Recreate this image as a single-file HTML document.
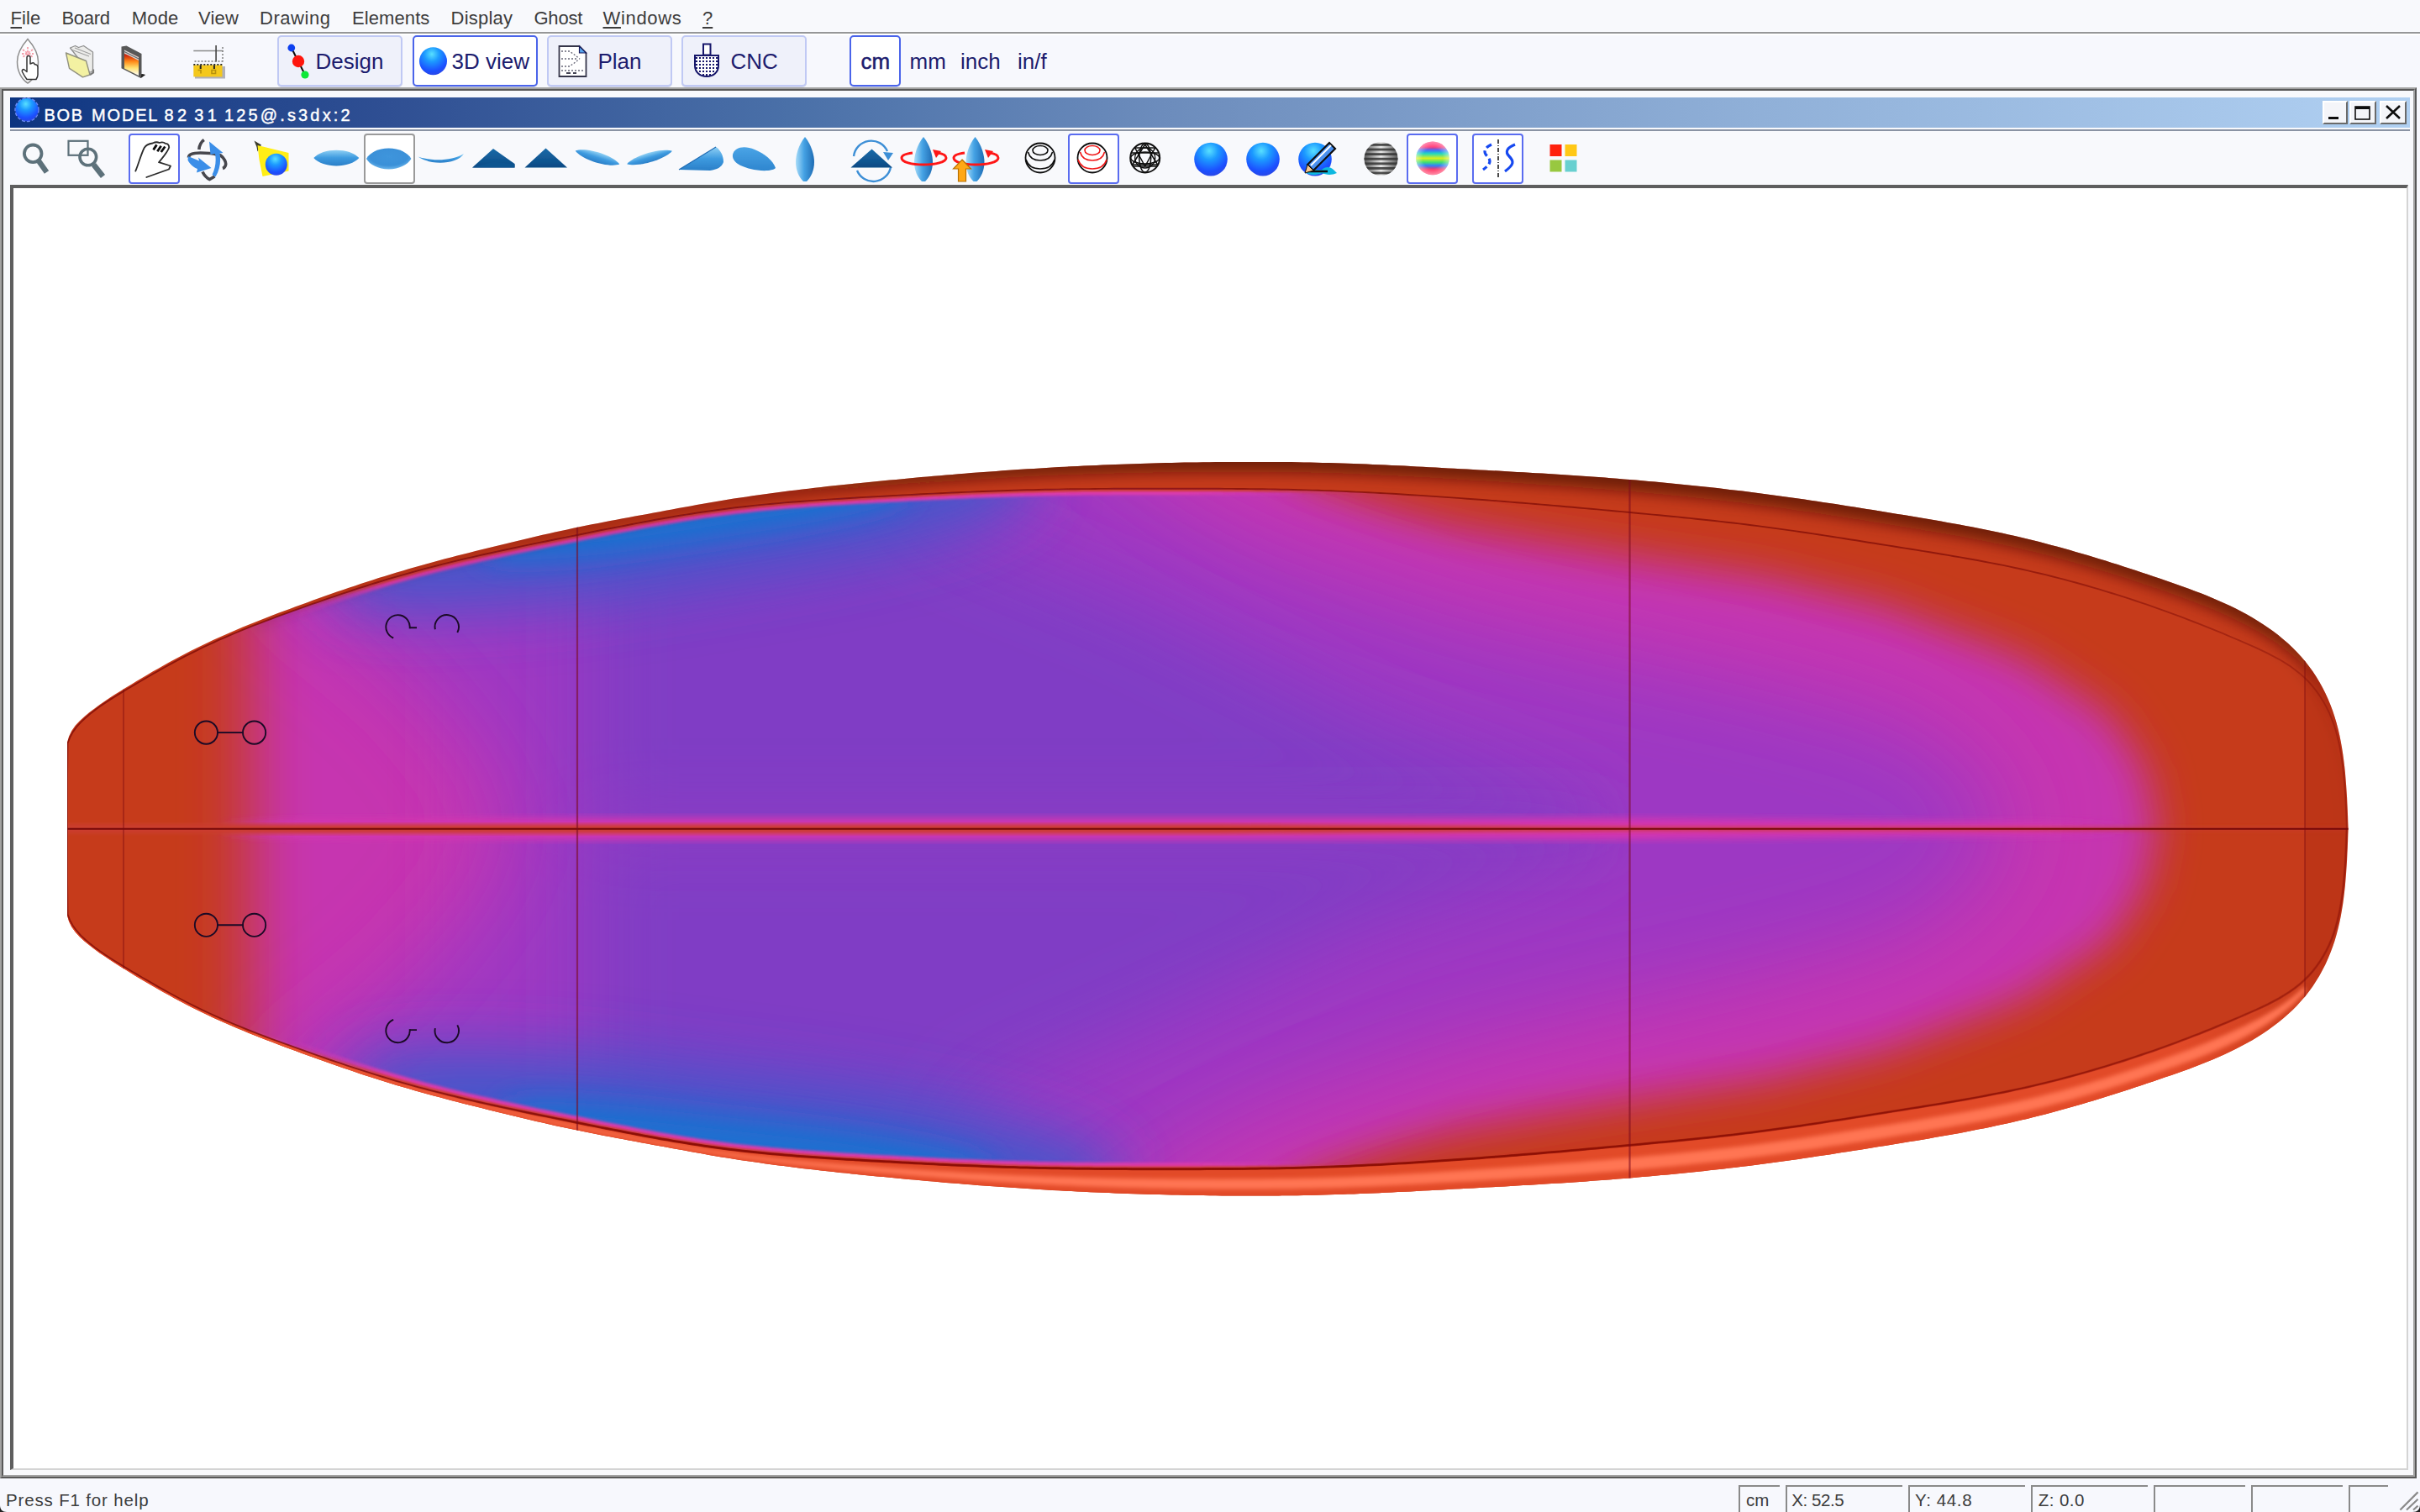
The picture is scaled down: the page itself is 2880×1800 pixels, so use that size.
<!DOCTYPE html>
<html><head><meta charset="utf-8"><title>Shape3D</title><style>
*{box-sizing:border-box}
html,body{margin:0;padding:0}
body{width:2880px;height:1800px;overflow:hidden;background:#f7f8fd;font-family:"Liberation Sans",sans-serif;position:relative}
.abs{position:absolute}
.ft{position:absolute;line-height:24px;white-space:nowrap}
.mi{color:#3c3c3c}
.ti{color:#fff;-webkit-text-stroke:0.45px #fff}
.sx{color:#3c3c3c}
.mi u{text-decoration-thickness:2px;text-underline-offset:3px}
.tb{position:absolute;top:42px;height:61px;border:2px solid #c0c9f4;border-radius:5px;background:#eff1fa;box-shadow:0 1px 0 #d0d4ea}
.tb.sel{background:#fff;border-color:#4a64ea}
.tt{position:absolute;font-size:26px;line-height:30px;color:#1c1c6e;white-space:nowrap;top:57.5px}
.cb{position:absolute;top:159px;height:60px;width:61px;border:2px solid #5a6cf0;border-radius:4px;background:#fff}
.cb.g{border-color:#9a9a9a}
.sf{position:absolute;top:1768px;height:32px;border-top:2px solid #8a8a8a;border-left:2px solid #8a8a8a}
.st{position:absolute;top:1774px;font-size:20.5px;line-height:24px;color:#3e3e3e;white-space:nowrap;letter-spacing:0.7px}
.wb{position:absolute;top:120px;height:28px;background:#f4f5f9;border-top:2px solid #fff;border-left:2px solid #fff;border-right:2px solid #6a6a6a;border-bottom:2px solid #6a6a6a}
</style></head><body>
<!-- menu bar -->
<div class="abs" style="left:0;top:0;width:2880px;height:38px;background:#f8f9fc"></div>
<span class="ft mi" style="left:12.5px;top:10.2px;font-size:22px;letter-spacing:0.08px;"><u>F</u>ile</span><span class="ft mi" style="left:73.4px;top:10.2px;font-size:22px;letter-spacing:-0.28px;">Board</span><span class="ft mi" style="left:156.7px;top:10.2px;font-size:22px;letter-spacing:0.19px;">Mode</span><span class="ft mi" style="left:236.0px;top:10.2px;font-size:22px;letter-spacing:0.23px;">View</span><span class="ft mi" style="left:309.0px;top:10.2px;font-size:22px;letter-spacing:0.55px;">Drawing</span><span class="ft mi" style="left:419.0px;top:10.2px;font-size:22px;letter-spacing:0.09px;">Elements</span><span class="ft mi" style="left:536.6px;top:10.2px;font-size:22px;letter-spacing:0.21px;">Display</span><span class="ft mi" style="left:635.4px;top:10.2px;font-size:22px;letter-spacing:-0.15px;">Ghost</span><span class="ft mi" style="left:717.5px;top:10.2px;font-size:22px;letter-spacing:0.67px;"><u>W</u>indows</span><span class="ft mi" style="left:836.0px;top:10.2px;font-size:22px;letter-spacing:0.00px;"><u>?</u></span>
<div class="abs" style="left:0;top:38px;width:2880px;height:2px;background:#969798"></div>
<div class="abs" style="left:0;top:40px;width:2880px;height:2px;background:#fff"></div>
<!-- main toolbar buttons -->
<div class="tb" style="left:330px;width:149px"></div><span class="tt" style="left:375.5px">Design</span>
<div class="tb sel" style="left:491px;width:149px"></div><span class="tt" style="left:537.5px">3D view</span>
<div class="tb" style="left:650.5px;width:149px"></div><span class="tt" style="left:711.5px">Plan</span>
<div class="tb" style="left:811px;width:149px"></div><span class="tt" style="left:869.5px">CNC</span>
<div class="tb sel" style="left:1010.5px;width:61px"></div><span class="tt" style="left:1024.5px;-webkit-text-stroke:0.5px #1c1c6e">cm</span>
<span class="tt" style="left:1082.5px">mm</span><span class="tt" style="left:1143px">inch</span><span class="tt" style="left:1211px">in/f</span>
<!-- MDI frame -->
<div class="abs" style="left:0;top:104px;width:2876px;height:1656px;border:2px solid #585858;border-top-color:#a2a2a2;border-left-color:#a2a2a2;background:#f8f9fc"></div>
<div class="abs" style="left:2px;top:106px;width:2872px;height:1652px;border:2px solid #a2a2a2;border-top-color:#585858;border-left-color:#585858"></div>
<!-- title bar -->
<div class="abs" style="left:12px;top:116px;width:2856px;height:36px;background:linear-gradient(90deg,#0c3480 0%,#1a3f88 5%,#2f4f93 15.700%,#4a70a8 32.500%,#6c8cbc 47.900%,#90b0d8 73%,#b0d0f2 100%)"></div>
<div class="abs" style="left:12px;top:154px;width:2856px;height:2px;background:#8a93a3"></div>
<span class="ft ti" style="left:52.6px;top:124.9px;font-size:20px;letter-spacing:1.68px;">BOB</span><span class="ft ti" style="left:109.1px;top:124.9px;font-size:20px;letter-spacing:1.82px;">MODEL</span><span class="ft ti" style="left:195.4px;top:124.9px;font-size:20px;letter-spacing:4.55px;">82</span><span class="ft ti" style="left:231.2px;top:124.9px;font-size:20px;letter-spacing:4.55px;">31</span><span class="ft ti" style="left:266.9px;top:124.9px;font-size:20px;letter-spacing:3.16px;">125@.s3dx:2</span>
<div class="wb" style="left:2764px;width:30px"></div><div class="wb" style="left:2796px;width:32px"></div><div class="wb" style="left:2832px;width:32px"></div>
<!-- child toolbar selected buttons -->
<div class="cb" style="left:153px"></div><div class="cb g" style="left:432.5px"></div><div class="cb" style="left:1270.5px"></div>
<div class="cb" style="left:1674px"></div><div class="cb" style="left:1752px"></div>
<!-- canvas -->
<div class="abs" style="left:12px;top:220px;width:2854px;height:1530px;background:#fff;border-top:4px solid #5e5e5e;border-left:4px solid #5e5e5e;border-right:2px solid #d4d4d4;border-bottom:2px solid #d4d4d4"></div>
<!-- status bar -->
<div class="abs" style="left:0;top:1760px;width:2880px;height:40px;background:#f7f8fd"></div>
<span class="ft sx" style="left:7.0px;top:1774.2px;font-size:20.5px;letter-spacing:0.84px;">Press F1 for help</span><span class="ft sx" style="left:2078.0px;top:1774.2px;font-size:20.5px;letter-spacing:-0.03px;">cm</span><span class="ft sx" style="left:2132.3px;top:1774.2px;font-size:20.5px;letter-spacing:-0.45px;">X: 52.5</span><span class="ft sx" style="left:2279.0px;top:1774.2px;font-size:20.5px;letter-spacing:0.62px;">Y: 44.8</span><span class="ft sx" style="left:2425.8px;top:1774.2px;font-size:20.5px;letter-spacing:0.43px;">Z: 0.0</span>
<div class="sf" style="left:2068.5px;width:49px"></div>
<div class="sf" style="left:2124.5px;width:139px"></div>
<div class="sf" style="left:2271px;width:139px"></div>
<div class="sf" style="left:2417px;width:139px"></div>
<div class="sf" style="left:2562.5px;width:109px"></div><div class="sf" style="left:2679px;width:109px"></div><div class="sf" style="left:2795px;width:47px"></div>

<svg id="board" style="position:absolute;left:0;top:0" width="2880" height="1800" viewBox="0 0 2880 1800">
<defs>
<clipPath id="cOut"><path d="M80.0,986.7 80.0,926.7 80.0,883.7 82.1,876.5 85.3,869.9 89.6,863.8 94.8,858.2 100.5,853.0 106.4,848.1 112.5,843.5 118.5,839.0 124.7,834.8 130.9,830.6 137.1,826.6 143.3,822.7 149.6,818.8 156.0,814.9 162.3,811.0 168.7,807.2 175.1,803.4 181.6,799.6 188.1,795.9 194.6,792.2 201.2,788.6 207.7,785.0 214.4,781.4 221.0,778.0 227.7,774.5 234.4,771.2 241.1,767.9 247.9,764.7 254.6,761.5 261.4,758.4 268.3,755.4 275.1,752.4 282.0,749.4 288.9,746.6 295.8,743.7 302.8,740.9 309.7,738.2 316.7,735.5 323.6,732.8 330.6,730.1 337.6,727.5 344.6,724.9 351.6,722.3 358.7,719.7 365.7,717.2 372.7,714.6 379.8,712.1 386.8,709.6 393.9,707.1 400.9,704.6 408.0,702.2 415.1,699.8 422.2,697.4 429.2,695.0 436.3,692.7 443.5,690.4 450.6,688.1 457.7,685.9 464.8,683.7 472.0,681.5 479.2,679.4 486.3,677.3 493.5,675.2 500.7,673.2 507.9,671.2 515.1,669.2 522.3,667.3 529.5,665.3 536.8,663.4 544.0,661.6 551.3,659.7 558.5,657.9 565.8,656.1 573.0,654.3 580.3,652.5 587.5,650.7 594.8,648.9 602.1,647.2 609.3,645.4 616.6,643.7 623.9,641.9 631.2,640.2 638.4,638.5 645.7,636.8 653.0,635.2 660.3,633.5 667.6,631.9 674.9,630.4 682.2,628.8 689.5,627.3 696.8,625.8 704.2,624.3 711.5,622.9 718.8,621.5 726.2,620.1 733.5,618.7 740.9,617.3 748.2,615.9 755.6,614.6 762.9,613.2 770.3,611.9 777.6,610.5 785.0,609.2 792.3,607.8 799.7,606.5 807.0,605.1 814.4,603.8 821.8,602.4 829.1,601.1 836.5,599.8 843.8,598.5 851.2,597.2 858.6,596.0 865.9,594.8 873.3,593.6 880.7,592.5 888.1,591.4 895.5,590.3 902.9,589.3 910.3,588.2 917.7,587.2 925.1,586.2 932.5,585.3 939.9,584.3 947.4,583.4 954.8,582.5 962.2,581.7 969.6,580.8 977.1,580.0 984.5,579.1 991.9,578.3 999.4,577.5 1006.8,576.8 1014.2,576.0 1021.7,575.2 1029.1,574.5 1036.6,573.7 1044.0,573.0 1051.4,572.3 1058.9,571.6 1066.3,570.9 1073.8,570.2 1081.2,569.5 1088.7,568.8 1096.1,568.1 1103.5,567.5 1111.0,566.8 1118.4,566.2 1125.9,565.5 1133.3,564.9 1140.8,564.3 1148.2,563.7 1155.7,563.1 1163.1,562.5 1170.6,562.0 1178.0,561.4 1185.5,560.9 1192.9,560.3 1200.4,559.8 1207.9,559.3 1215.3,558.8 1222.8,558.3 1230.2,557.9 1237.7,557.4 1245.2,557.0 1252.6,556.5 1260.1,556.1 1267.5,555.7 1275.0,555.3 1282.5,555.0 1289.9,554.6 1297.4,554.2 1304.9,553.9 1312.3,553.6 1319.8,553.3 1327.3,553.0 1334.8,552.7 1342.2,552.4 1349.7,552.2 1357.2,551.9 1364.6,551.7 1372.1,551.5 1379.6,551.3 1387.1,551.1 1394.5,550.9 1402.0,550.8 1409.5,550.6 1416.9,550.5 1424.4,550.4 1431.9,550.3 1439.4,550.2 1446.8,550.1 1454.3,550.0 1461.8,550.0 1469.3,549.9 1476.7,549.9 1484.2,549.9 1491.7,549.9 1499.2,549.9 1506.6,549.9 1514.1,549.9 1521.6,550.0 1529.1,550.1 1536.5,550.1 1544.0,550.2 1551.5,550.4 1559.0,550.5 1566.4,550.7 1573.9,550.9 1581.4,551.1 1588.8,551.3 1596.3,551.5 1603.8,551.8 1611.2,552.0 1618.7,552.3 1626.2,552.6 1633.7,552.9 1641.1,553.2 1648.6,553.6 1656.1,553.9 1663.5,554.3 1671.0,554.6 1678.5,555.0 1685.9,555.4 1693.4,555.8 1700.8,556.2 1708.3,556.6 1715.8,557.0 1723.2,557.4 1730.7,557.8 1738.2,558.2 1745.6,558.6 1753.1,559.0 1760.6,559.4 1768.0,559.8 1775.5,560.2 1783.0,560.6 1790.4,561.0 1797.9,561.4 1805.3,561.9 1812.8,562.3 1820.3,562.7 1827.7,563.2 1835.2,563.6 1842.6,564.1 1850.1,564.6 1857.6,565.0 1865.0,565.5 1872.5,566.0 1879.9,566.5 1887.4,567.0 1894.8,567.6 1902.3,568.1 1909.8,568.6 1917.2,569.2 1924.7,569.8 1932.1,570.4 1939.6,571.0 1947.0,571.6 1954.5,572.3 1961.9,572.9 1969.4,573.6 1976.8,574.3 1984.2,575.0 1991.7,575.7 1999.1,576.4 2006.6,577.2 2014.0,577.9 2021.4,578.7 2028.9,579.5 2036.3,580.3 2043.7,581.1 2051.2,582.0 2058.6,582.9 2066.0,583.7 2073.4,584.6 2080.8,585.5 2088.3,586.5 2095.7,587.4 2103.1,588.4 2110.5,589.4 2117.9,590.4 2125.3,591.4 2132.7,592.5 2140.1,593.5 2147.5,594.6 2154.9,595.7 2162.3,596.8 2169.7,597.9 2177.1,599.0 2184.4,600.1 2191.8,601.3 2199.2,602.4 2206.6,603.6 2214.0,604.7 2221.4,605.9 2228.8,607.1 2236.1,608.3 2243.5,609.5 2250.9,610.7 2258.3,611.9 2265.7,613.1 2273.1,614.3 2280.4,615.5 2287.8,616.7 2295.2,618.0 2302.6,619.3 2309.9,620.6 2317.3,621.9 2324.6,623.2 2332.0,624.5 2339.4,625.9 2346.7,627.3 2354.0,628.8 2361.4,630.2 2368.7,631.7 2376.0,633.3 2383.3,634.8 2390.6,636.4 2397.9,638.1 2405.1,639.8 2412.4,641.5 2419.7,643.3 2426.9,645.1 2434.1,647.0 2441.4,648.9 2448.6,650.8 2455.8,652.8 2463.0,654.8 2470.1,656.9 2477.3,659.0 2484.5,661.1 2491.6,663.2 2498.8,665.4 2505.9,667.6 2513.1,669.9 2520.2,672.1 2527.3,674.4 2534.4,676.7 2541.6,679.1 2548.7,681.4 2555.8,683.8 2562.9,686.2 2569.9,688.6 2577.0,691.1 2584.1,693.5 2591.2,696.0 2598.2,698.5 2605.3,701.0 2612.3,703.7 2619.3,706.3 2626.2,709.1 2633.1,711.9 2640.0,714.9 2646.8,717.9 2653.6,721.1 2660.3,724.3 2667.0,727.8 2673.6,731.3 2680.1,735.0 2686.6,738.9 2692.9,743.0 2699.2,747.2 2705.3,751.6 2711.3,756.1 2717.1,760.9 2722.8,765.8 2728.3,770.9 2733.5,776.2 2738.6,781.8 2743.5,787.5 2748.1,793.4 2752.5,799.5 2756.6,805.8 2760.5,812.2 2764.1,818.8 2767.5,825.5 2770.6,832.3 2773.5,839.3 2776.1,846.3 2778.5,853.4 2780.6,860.6 2782.5,867.8 2784.2,875.1 2785.7,882.5 2787.0,889.8 2788.2,897.2 2789.2,904.7 2790.1,912.1 2790.9,919.5 2791.5,927.0 2792.1,934.4 2792.6,941.9 2793.1,949.4 2793.4,956.8 2793.8,964.3 2794.1,971.8 2794.3,979.2 2794.6,986.7 2794.3,994.2 2794.1,1001.6 2793.8,1009.1 2793.4,1016.6 2793.1,1024.0 2792.6,1031.5 2792.1,1039.0 2791.5,1046.4 2790.9,1053.9 2790.1,1061.3 2789.2,1068.7 2788.2,1076.2 2787.0,1083.6 2785.7,1090.9 2784.2,1098.3 2782.5,1105.6 2780.6,1112.8 2778.5,1120.0 2776.1,1127.1 2773.5,1134.1 2770.6,1141.1 2767.5,1147.9 2764.1,1154.6 2760.5,1161.2 2756.6,1167.6 2752.5,1173.9 2748.1,1180.0 2743.5,1185.9 2738.6,1191.6 2733.5,1197.2 2728.3,1202.5 2722.8,1207.6 2717.1,1212.5 2711.3,1217.3 2705.3,1221.8 2699.2,1226.2 2692.9,1230.4 2686.6,1234.5 2680.1,1238.4 2673.6,1242.1 2667.0,1245.6 2660.3,1249.1 2653.6,1252.3 2646.8,1255.5 2640.0,1258.5 2633.1,1261.5 2626.2,1264.3 2619.3,1267.1 2612.3,1269.7 2605.3,1272.4 2598.2,1274.9 2591.2,1277.4 2584.1,1279.9 2577.0,1282.3 2569.9,1284.8 2562.9,1287.2 2555.8,1289.6 2548.7,1292.0 2541.6,1294.3 2534.4,1296.7 2527.3,1299.0 2520.2,1301.3 2513.1,1303.5 2505.9,1305.8 2498.8,1308.0 2491.6,1310.2 2484.5,1312.3 2477.3,1314.4 2470.1,1316.5 2463.0,1318.6 2455.8,1320.6 2448.6,1322.6 2441.4,1324.5 2434.1,1326.4 2426.9,1328.3 2419.7,1330.1 2412.4,1331.9 2405.1,1333.6 2397.9,1335.3 2390.6,1337.0 2383.3,1338.6 2376.0,1340.1 2368.7,1341.7 2361.4,1343.2 2354.0,1344.6 2346.7,1346.1 2339.4,1347.5 2332.0,1348.9 2324.6,1350.2 2317.3,1351.5 2309.9,1352.8 2302.6,1354.1 2295.2,1355.4 2287.8,1356.7 2280.4,1357.9 2273.1,1359.1 2265.7,1360.3 2258.3,1361.5 2250.9,1362.7 2243.5,1363.9 2236.1,1365.1 2228.8,1366.3 2221.4,1367.5 2214.0,1368.7 2206.6,1369.8 2199.2,1371.0 2191.8,1372.1 2184.4,1373.3 2177.1,1374.4 2169.7,1375.5 2162.3,1376.6 2154.9,1377.7 2147.5,1378.8 2140.1,1379.9 2132.7,1380.9 2125.3,1382.0 2117.9,1383.0 2110.5,1384.0 2103.1,1385.0 2095.7,1386.0 2088.3,1386.9 2080.8,1387.9 2073.4,1388.8 2066.0,1389.7 2058.6,1390.5 2051.2,1391.4 2043.7,1392.3 2036.3,1393.1 2028.9,1393.9 2021.4,1394.7 2014.0,1395.5 2006.6,1396.2 1999.1,1397.0 1991.7,1397.7 1984.2,1398.4 1976.8,1399.1 1969.4,1399.8 1961.9,1400.5 1954.5,1401.1 1947.0,1401.8 1939.6,1402.4 1932.1,1403.0 1924.7,1403.6 1917.2,1404.2 1909.8,1404.8 1902.3,1405.3 1894.8,1405.8 1887.4,1406.4 1879.9,1406.9 1872.5,1407.4 1865.0,1407.9 1857.6,1408.4 1850.1,1408.8 1842.6,1409.3 1835.2,1409.8 1827.7,1410.2 1820.3,1410.7 1812.8,1411.1 1805.3,1411.5 1797.9,1412.0 1790.4,1412.4 1783.0,1412.8 1775.5,1413.2 1768.0,1413.6 1760.6,1414.0 1753.1,1414.4 1745.6,1414.8 1738.2,1415.2 1730.7,1415.6 1723.2,1416.0 1715.8,1416.4 1708.3,1416.8 1700.8,1417.2 1693.4,1417.6 1685.9,1418.0 1678.5,1418.4 1671.0,1418.8 1663.5,1419.1 1656.1,1419.5 1648.6,1419.8 1641.1,1420.2 1633.7,1420.5 1626.2,1420.8 1618.7,1421.1 1611.2,1421.4 1603.8,1421.6 1596.3,1421.9 1588.8,1422.1 1581.4,1422.3 1573.9,1422.5 1566.4,1422.7 1559.0,1422.9 1551.5,1423.0 1544.0,1423.2 1536.5,1423.3 1529.1,1423.3 1521.6,1423.4 1514.1,1423.5 1506.6,1423.5 1499.2,1423.5 1491.7,1423.5 1484.2,1423.5 1476.7,1423.5 1469.3,1423.5 1461.8,1423.4 1454.3,1423.4 1446.8,1423.3 1439.4,1423.2 1431.9,1423.1 1424.4,1423.0 1416.9,1422.9 1409.5,1422.8 1402.0,1422.6 1394.5,1422.5 1387.1,1422.3 1379.6,1422.1 1372.1,1421.9 1364.6,1421.7 1357.2,1421.5 1349.7,1421.2 1342.2,1421.0 1334.8,1420.7 1327.3,1420.4 1319.8,1420.1 1312.3,1419.8 1304.9,1419.5 1297.4,1419.2 1289.9,1418.8 1282.5,1418.4 1275.0,1418.1 1267.5,1417.7 1260.1,1417.3 1252.6,1416.9 1245.2,1416.4 1237.7,1416.0 1230.2,1415.5 1222.8,1415.1 1215.3,1414.6 1207.9,1414.1 1200.4,1413.6 1192.9,1413.1 1185.5,1412.5 1178.0,1412.0 1170.6,1411.4 1163.1,1410.9 1155.7,1410.3 1148.2,1409.7 1140.8,1409.1 1133.3,1408.5 1125.9,1407.9 1118.4,1407.2 1111.0,1406.6 1103.5,1405.9 1096.1,1405.3 1088.7,1404.6 1081.2,1403.9 1073.8,1403.2 1066.3,1402.5 1058.9,1401.8 1051.4,1401.1 1044.0,1400.4 1036.6,1399.7 1029.1,1398.9 1021.7,1398.2 1014.2,1397.4 1006.8,1396.6 999.4,1395.9 991.9,1395.1 984.5,1394.3 977.1,1393.4 969.6,1392.6 962.2,1391.7 954.8,1390.9 947.4,1390.0 939.9,1389.1 932.5,1388.1 925.1,1387.2 917.7,1386.2 910.3,1385.2 902.9,1384.1 895.5,1383.1 888.1,1382.0 880.7,1380.9 873.3,1379.8 865.9,1378.6 858.6,1377.4 851.2,1376.2 843.8,1374.9 836.5,1373.6 829.1,1372.3 821.8,1371.0 814.4,1369.6 807.0,1368.3 799.7,1366.9 792.3,1365.6 785.0,1364.2 777.6,1362.9 770.3,1361.5 762.9,1360.2 755.6,1358.8 748.2,1357.5 740.9,1356.1 733.5,1354.7 726.2,1353.3 718.8,1351.9 711.5,1350.5 704.2,1349.1 696.8,1347.6 689.5,1346.1 682.2,1344.6 674.9,1343.0 667.6,1341.5 660.3,1339.9 653.0,1338.2 645.7,1336.6 638.4,1334.9 631.2,1333.2 623.9,1331.5 616.6,1329.7 609.3,1328.0 602.1,1326.2 594.8,1324.5 587.5,1322.7 580.3,1320.9 573.0,1319.1 565.8,1317.3 558.5,1315.5 551.3,1313.7 544.0,1311.8 536.8,1310.0 529.5,1308.1 522.3,1306.1 515.1,1304.2 507.9,1302.2 500.7,1300.2 493.5,1298.2 486.3,1296.1 479.2,1294.0 472.0,1291.9 464.8,1289.7 457.7,1287.5 450.6,1285.3 443.5,1283.0 436.3,1280.7 429.2,1278.4 422.2,1276.0 415.1,1273.6 408.0,1271.2 400.9,1268.8 393.9,1266.3 386.8,1263.8 379.8,1261.3 372.7,1258.8 365.7,1256.2 358.7,1253.7 351.6,1251.1 344.6,1248.5 337.6,1245.9 330.6,1243.3 323.6,1240.6 316.7,1237.9 309.7,1235.2 302.8,1232.5 295.8,1229.7 288.9,1226.8 282.0,1224.0 275.1,1221.0 268.3,1218.0 261.4,1215.0 254.6,1211.9 247.9,1208.7 241.1,1205.5 234.4,1202.2 227.7,1198.9 221.0,1195.4 214.4,1192.0 207.7,1188.4 201.2,1184.8 194.6,1181.2 188.1,1177.5 181.6,1173.8 175.1,1170.0 168.7,1166.2 162.3,1162.4 156.0,1158.5 149.6,1154.6 143.3,1150.7 137.1,1146.8 130.9,1142.8 124.7,1138.6 118.5,1134.4 112.5,1129.9 106.4,1125.3 100.5,1120.4 94.8,1115.2 89.6,1109.6 85.3,1103.5 82.1,1096.9 80.0,1089.7 80.0,1046.7Z"/></clipPath>
<clipPath id="cIn"><path d="M80.0,986.7 80.0,926.7 80.5,884.7 83.2,877.8 86.7,871.4 91.1,865.4 96.1,859.8 101.6,854.7 107.3,849.8 113.2,845.2 119.2,840.8 125.3,836.6 131.4,832.6 137.7,828.7 143.9,824.9 150.2,821.0 156.6,817.2 162.9,813.5 169.3,809.7 175.7,806.0 182.1,802.3 188.5,798.6 194.9,795.0 201.4,791.4 207.9,787.9 214.4,784.4 221.0,780.9 227.6,777.6 234.2,774.3 240.8,771.0 247.5,767.9 254.2,764.8 261.0,761.7 267.7,758.8 274.5,755.9 281.3,753.0 288.2,750.2 295.0,747.4 301.9,744.7 308.8,742.1 315.7,739.4 322.6,736.8 329.6,734.2 336.5,731.7 343.5,729.2 350.4,726.7 357.4,724.2 364.4,721.7 371.3,719.2 378.3,716.8 385.3,714.4 392.3,711.9 399.3,709.6 406.3,707.2 413.3,704.8 420.3,702.5 427.3,700.2 434.4,698.0 441.4,695.7 448.5,693.5 455.5,691.4 462.6,689.2 469.7,687.1 476.8,685.1 483.9,683.1 491.0,681.1 498.1,679.1 505.3,677.2 512.4,675.3 519.6,673.5 526.8,671.7 533.9,669.9 541.1,668.2 548.3,666.4 555.5,664.7 562.7,663.1 569.9,661.4 577.1,659.8 584.3,658.2 591.6,656.6 598.8,655.0 606.0,653.5 613.2,652.0 620.5,650.4 627.7,648.9 634.9,647.4 642.2,645.9 649.4,644.5 656.7,643.0 663.9,641.5 671.1,640.1 678.4,638.6 685.6,637.2 692.9,635.7 700.1,634.2 707.4,632.8 714.6,631.3 721.9,629.9 729.1,628.5 736.4,627.1 743.7,625.7 750.9,624.3 758.2,622.9 765.5,621.5 772.7,620.2 780.0,618.8 787.3,617.5 794.6,616.3 801.8,615.0 809.1,613.8 816.4,612.6 823.7,611.5 831.0,610.3 838.3,609.2 845.6,608.2 852.9,607.2 860.3,606.2 867.6,605.2 874.9,604.3 882.3,603.5 889.6,602.7 896.9,601.9 904.3,601.1 911.7,600.4 919.0,599.7 926.4,599.1 933.7,598.4 941.1,597.8 948.5,597.2 955.8,596.7 963.2,596.1 970.6,595.6 978.0,595.1 985.3,594.6 992.7,594.1 1000.1,593.7 1007.5,593.2 1014.9,592.8 1022.3,592.3 1029.6,591.9 1037.0,591.5 1044.4,591.1 1051.8,590.7 1059.2,590.3 1066.6,589.9 1073.9,589.5 1081.3,589.1 1088.7,588.7 1096.1,588.3 1103.5,587.9 1110.8,587.6 1118.2,587.2 1125.6,586.9 1133.0,586.5 1140.4,586.2 1147.8,585.9 1155.1,585.6 1162.5,585.3 1169.9,585.0 1177.3,584.7 1184.7,584.5 1192.1,584.2 1199.4,584.0 1206.8,583.8 1214.2,583.5 1221.6,583.3 1229.0,583.2 1236.4,583.0 1243.8,582.8 1251.1,582.7 1258.5,582.6 1265.9,582.4 1273.3,582.3 1280.7,582.2 1288.1,582.1 1295.5,582.1 1302.9,582.0 1310.3,581.9 1317.6,581.9 1325.0,581.8 1332.4,581.8 1339.8,581.8 1347.2,581.7 1354.6,581.7 1362.0,581.7 1369.4,581.7 1376.8,581.7 1384.2,581.7 1391.6,581.7 1399.0,581.7 1406.3,581.7 1413.7,581.7 1421.1,581.7 1428.5,581.7 1435.9,581.8 1443.3,581.8 1450.7,581.8 1458.1,581.9 1465.5,581.9 1472.9,582.0 1480.3,582.0 1487.6,582.1 1495.0,582.2 1502.4,582.3 1509.8,582.4 1517.2,582.5 1524.6,582.7 1532.0,582.8 1539.4,583.0 1546.8,583.2 1554.1,583.4 1561.5,583.6 1568.9,583.8 1576.3,584.1 1583.7,584.3 1591.1,584.6 1598.5,584.9 1605.8,585.2 1613.2,585.6 1620.6,585.9 1628.0,586.3 1635.4,586.6 1642.7,587.0 1650.1,587.4 1657.5,587.8 1664.9,588.3 1672.3,588.7 1679.6,589.2 1687.0,589.6 1694.4,590.1 1701.8,590.6 1709.1,591.1 1716.5,591.6 1723.9,592.1 1731.3,592.6 1738.6,593.1 1746.0,593.7 1753.4,594.2 1760.7,594.7 1768.1,595.3 1775.5,595.9 1782.8,596.4 1790.2,597.0 1797.6,597.6 1804.9,598.2 1812.3,598.8 1819.7,599.4 1827.0,600.0 1834.4,600.6 1841.8,601.3 1849.1,601.9 1856.5,602.5 1863.9,603.2 1871.2,603.8 1878.6,604.5 1885.9,605.1 1893.3,605.8 1900.7,606.4 1908.0,607.1 1915.4,607.8 1922.7,608.5 1930.1,609.1 1937.5,609.8 1944.8,610.5 1952.2,611.2 1959.5,611.9 1966.9,612.6 1974.3,613.3 1981.6,614.0 1989.0,614.7 1996.3,615.4 2003.7,616.2 2011.0,616.9 2018.4,617.7 2025.7,618.5 2033.1,619.2 2040.4,620.0 2047.8,620.9 2055.1,621.7 2062.5,622.5 2069.8,623.4 2077.1,624.3 2084.5,625.2 2091.8,626.1 2099.1,627.1 2106.5,628.1 2113.8,629.1 2121.1,630.1 2128.4,631.1 2135.7,632.1 2143.0,633.2 2150.3,634.3 2157.7,635.4 2165.0,636.5 2172.3,637.6 2179.6,638.8 2186.9,639.9 2194.2,641.0 2201.5,642.2 2208.8,643.3 2216.1,644.5 2223.4,645.7 2230.7,646.8 2238.0,648.0 2245.3,649.1 2252.6,650.3 2259.9,651.5 2267.2,652.6 2274.5,653.8 2281.8,654.9 2289.1,656.1 2296.4,657.3 2303.7,658.5 2311.0,659.7 2318.2,660.9 2325.5,662.2 2332.8,663.4 2340.1,664.7 2347.4,666.0 2354.6,667.3 2361.9,668.7 2369.2,670.1 2376.4,671.5 2383.7,672.9 2390.9,674.4 2398.1,676.0 2405.4,677.5 2412.6,679.1 2419.8,680.8 2427.0,682.5 2434.2,684.2 2441.4,686.0 2448.6,687.8 2455.7,689.7 2462.9,691.6 2470.0,693.5 2477.2,695.5 2484.3,697.5 2491.4,699.6 2498.5,701.7 2505.6,703.8 2512.7,706.0 2519.7,708.2 2526.8,710.4 2533.8,712.7 2540.8,715.0 2547.8,717.4 2554.8,719.7 2561.8,722.1 2568.7,724.6 2575.7,727.1 2582.6,729.6 2589.5,732.1 2596.4,734.7 2603.3,737.3 2610.1,740.0 2617.0,742.6 2623.8,745.4 2630.7,748.1 2637.5,750.9 2644.4,753.7 2651.2,756.6 2658.0,759.5 2664.9,762.4 2671.7,765.4 2678.6,768.4 2685.4,771.4 2692.2,774.6 2699.0,777.8 2705.6,781.3 2712.2,784.8 2718.5,788.6 2724.8,792.6 2730.8,796.9 2736.5,801.4 2742.0,806.3 2747.3,811.5 2752.2,817.0 2756.8,822.9 2761.1,829.0 2765.0,835.3 2768.6,841.8 2771.9,848.5 2774.8,855.3 2777.4,862.3 2779.6,869.3 2781.6,876.5 2783.3,883.7 2784.8,890.9 2786.1,898.3 2787.2,905.6 2788.2,912.9 2789.0,920.3 2789.7,927.7 2790.3,935.0 2790.9,942.4 2791.3,949.8 2791.7,957.2 2792.0,964.5 2792.3,971.9 2792.6,979.3 2792.8,986.7 2792.6,994.1 2792.3,1001.5 2792.0,1008.9 2791.7,1016.2 2791.3,1023.6 2790.9,1031.0 2790.3,1038.4 2789.7,1045.7 2789.0,1053.1 2788.2,1060.5 2787.2,1067.8 2786.1,1075.1 2784.8,1082.5 2783.3,1089.7 2781.6,1096.9 2779.6,1104.1 2777.4,1111.1 2774.8,1118.1 2771.9,1124.9 2768.6,1131.6 2765.0,1138.1 2761.1,1144.4 2756.8,1150.5 2752.2,1156.4 2747.3,1161.9 2742.0,1167.1 2736.5,1172.0 2730.8,1176.5 2724.8,1180.8 2718.5,1184.8 2712.2,1188.6 2705.6,1192.1 2699.0,1195.6 2692.2,1198.8 2685.4,1202.0 2678.6,1205.0 2671.7,1208.0 2664.9,1211.0 2658.0,1213.9 2651.2,1216.8 2644.4,1219.7 2637.5,1222.5 2630.7,1225.3 2623.8,1228.0 2617.0,1230.8 2610.1,1233.4 2603.3,1236.1 2596.4,1238.7 2589.5,1241.3 2582.6,1243.8 2575.7,1246.3 2568.7,1248.8 2561.8,1251.3 2554.8,1253.7 2547.8,1256.0 2540.8,1258.4 2533.8,1260.7 2526.8,1263.0 2519.7,1265.2 2512.7,1267.4 2505.6,1269.6 2498.5,1271.7 2491.4,1273.8 2484.3,1275.9 2477.2,1277.9 2470.0,1279.9 2462.9,1281.8 2455.7,1283.7 2448.6,1285.6 2441.4,1287.4 2434.2,1289.2 2427.0,1290.9 2419.8,1292.6 2412.6,1294.3 2405.4,1295.9 2398.1,1297.4 2390.9,1299.0 2383.7,1300.5 2376.4,1301.9 2369.2,1303.3 2361.9,1304.7 2354.6,1306.1 2347.4,1307.4 2340.1,1308.7 2332.8,1310.0 2325.5,1311.2 2318.2,1312.5 2311.0,1313.7 2303.7,1314.9 2296.4,1316.1 2289.1,1317.3 2281.8,1318.5 2274.5,1319.6 2267.2,1320.8 2259.9,1321.9 2252.6,1323.1 2245.3,1324.3 2238.0,1325.4 2230.7,1326.6 2223.4,1327.7 2216.1,1328.9 2208.8,1330.1 2201.5,1331.2 2194.2,1332.4 2186.9,1333.5 2179.6,1334.6 2172.3,1335.8 2165.0,1336.9 2157.7,1338.0 2150.3,1339.1 2143.0,1340.2 2135.7,1341.3 2128.4,1342.3 2121.1,1343.3 2113.8,1344.3 2106.5,1345.3 2099.1,1346.3 2091.8,1347.3 2084.5,1348.2 2077.1,1349.1 2069.8,1350.0 2062.5,1350.9 2055.1,1351.7 2047.8,1352.5 2040.4,1353.4 2033.1,1354.2 2025.7,1354.9 2018.4,1355.7 2011.0,1356.5 2003.7,1357.2 1996.3,1358.0 1989.0,1358.7 1981.6,1359.4 1974.3,1360.1 1966.9,1360.8 1959.5,1361.5 1952.2,1362.2 1944.8,1362.9 1937.5,1363.6 1930.1,1364.3 1922.7,1364.9 1915.4,1365.6 1908.0,1366.3 1900.7,1367.0 1893.3,1367.6 1885.9,1368.3 1878.6,1368.9 1871.2,1369.6 1863.9,1370.2 1856.5,1370.9 1849.1,1371.5 1841.8,1372.1 1834.4,1372.8 1827.0,1373.4 1819.7,1374.0 1812.3,1374.6 1804.9,1375.2 1797.6,1375.8 1790.2,1376.4 1782.8,1377.0 1775.5,1377.5 1768.1,1378.1 1760.7,1378.7 1753.4,1379.2 1746.0,1379.7 1738.6,1380.3 1731.3,1380.8 1723.9,1381.3 1716.5,1381.8 1709.1,1382.3 1701.8,1382.8 1694.4,1383.3 1687.0,1383.8 1679.6,1384.2 1672.3,1384.7 1664.9,1385.1 1657.5,1385.6 1650.1,1386.0 1642.7,1386.4 1635.4,1386.8 1628.0,1387.1 1620.6,1387.5 1613.2,1387.8 1605.8,1388.2 1598.5,1388.5 1591.1,1388.8 1583.7,1389.1 1576.3,1389.3 1568.9,1389.6 1561.5,1389.8 1554.1,1390.0 1546.8,1390.2 1539.4,1390.4 1532.0,1390.6 1524.6,1390.7 1517.2,1390.9 1509.8,1391.0 1502.4,1391.1 1495.0,1391.2 1487.6,1391.3 1480.3,1391.4 1472.9,1391.4 1465.5,1391.5 1458.1,1391.5 1450.7,1391.6 1443.3,1391.6 1435.9,1391.6 1428.5,1391.7 1421.1,1391.7 1413.7,1391.7 1406.3,1391.7 1399.0,1391.7 1391.6,1391.7 1384.2,1391.7 1376.8,1391.7 1369.4,1391.7 1362.0,1391.7 1354.6,1391.7 1347.2,1391.7 1339.8,1391.6 1332.4,1391.6 1325.0,1391.6 1317.6,1391.5 1310.3,1391.5 1302.9,1391.4 1295.5,1391.3 1288.1,1391.3 1280.7,1391.2 1273.3,1391.1 1265.9,1391.0 1258.5,1390.8 1251.1,1390.7 1243.8,1390.6 1236.4,1390.4 1229.0,1390.2 1221.6,1390.1 1214.2,1389.9 1206.8,1389.6 1199.4,1389.4 1192.1,1389.2 1184.7,1388.9 1177.3,1388.7 1169.9,1388.4 1162.5,1388.1 1155.1,1387.8 1147.8,1387.5 1140.4,1387.2 1133.0,1386.9 1125.6,1386.5 1118.2,1386.2 1110.8,1385.8 1103.5,1385.5 1096.1,1385.1 1088.7,1384.7 1081.3,1384.3 1073.9,1383.9 1066.6,1383.5 1059.2,1383.1 1051.8,1382.7 1044.4,1382.3 1037.0,1381.9 1029.6,1381.5 1022.3,1381.1 1014.9,1380.6 1007.5,1380.2 1000.1,1379.7 992.7,1379.3 985.3,1378.8 978.0,1378.3 970.6,1377.8 963.2,1377.3 955.8,1376.7 948.5,1376.2 941.1,1375.6 933.7,1375.0 926.4,1374.3 919.0,1373.7 911.7,1373.0 904.3,1372.3 896.9,1371.5 889.6,1370.7 882.3,1369.9 874.9,1369.1 867.6,1368.2 860.3,1367.2 852.9,1366.2 845.6,1365.2 838.3,1364.2 831.0,1363.1 823.7,1361.9 816.4,1360.8 809.1,1359.6 801.8,1358.4 794.6,1357.1 787.3,1355.9 780.0,1354.6 772.7,1353.2 765.5,1351.9 758.2,1350.5 750.9,1349.1 743.7,1347.7 736.4,1346.3 729.1,1344.9 721.9,1343.5 714.6,1342.1 707.4,1340.6 700.1,1339.2 692.9,1337.7 685.6,1336.2 678.4,1334.8 671.1,1333.3 663.9,1331.9 656.7,1330.4 649.4,1328.9 642.2,1327.5 634.9,1326.0 627.7,1324.5 620.5,1323.0 613.2,1321.4 606.0,1319.9 598.8,1318.4 591.6,1316.8 584.3,1315.2 577.1,1313.6 569.9,1312.0 562.7,1310.3 555.5,1308.7 548.3,1307.0 541.1,1305.2 533.9,1303.5 526.8,1301.7 519.6,1299.9 512.4,1298.1 505.3,1296.2 498.1,1294.3 491.0,1292.3 483.9,1290.3 476.8,1288.3 469.7,1286.3 462.6,1284.2 455.5,1282.0 448.5,1279.9 441.4,1277.7 434.4,1275.4 427.3,1273.2 420.3,1270.9 413.3,1268.6 406.3,1266.2 399.3,1263.8 392.3,1261.5 385.3,1259.0 378.3,1256.6 371.3,1254.2 364.4,1251.7 357.4,1249.2 350.4,1246.7 343.5,1244.2 336.5,1241.7 329.6,1239.2 322.6,1236.6 315.7,1234.0 308.8,1231.3 301.9,1228.7 295.0,1226.0 288.2,1223.2 281.3,1220.4 274.5,1217.5 267.7,1214.6 261.0,1211.7 254.2,1208.6 247.5,1205.5 240.8,1202.4 234.2,1199.1 227.6,1195.8 221.0,1192.5 214.4,1189.0 207.9,1185.5 201.4,1182.0 194.9,1178.4 188.5,1174.8 182.1,1171.1 175.7,1167.4 169.3,1163.7 162.9,1159.9 156.6,1156.2 150.2,1152.4 143.9,1148.5 137.7,1144.7 131.4,1140.8 125.3,1136.8 119.2,1132.6 113.2,1128.2 107.3,1123.6 101.6,1118.7 96.1,1113.6 91.1,1108.0 86.7,1102.0 83.2,1095.6 80.5,1088.7 80.0,1046.7Z"/></clipPath>
<clipPath id="cTop"><rect x="0" y="400" width="2880" height="586.7"/></clipPath>
<clipPath id="cBot"><rect x="0" y="986.7" width="2880" height="600"/></clipPath>
<filter id="b25" x="-10%" y="-20%" width="120%" height="140%"><feGaussianBlur stdDeviation="25"/></filter>
<filter id="b55" x="-20%" y="-40%" width="140%" height="180%"><feGaussianBlur stdDeviation="55"/></filter>
<filter id="b45" x="-20%" y="-60%" width="140%" height="220%"><feGaussianBlur stdDeviation="45"/></filter>
<clipPath id="cL1939"><rect x="0" y="400" width="1939.5" height="1200"/></clipPath>
<filter id="b40" x="-20%" y="-60%" width="140%" height="220%"><feGaussianBlur stdDeviation="38"/></filter>
<filter id="b18" x="-20%" y="-60%" width="140%" height="220%"><feGaussianBlur stdDeviation="16"/></filter>
<filter id="b6" x="-5%" y="-20%" width="110%" height="140%"><feGaussianBlur stdDeviation="9"/></filter>
<filter id="b5" x="-5%" y="-20%" width="110%" height="140%"><feGaussianBlur stdDeviation="5"/></filter>
<filter id="b3" x="-5%" y="-20%" width="110%" height="140%"><feGaussianBlur stdDeviation="2.5"/></filter>
<filter id="b2" x="-5%" y="-20%" width="110%" height="140%"><feGaussianBlur stdDeviation="1.8"/></filter>
<filter id="b1" x="-5%" y="-20%" width="110%" height="140%"><feGaussianBlur stdDeviation="1.2"/></filter>
<linearGradient id="pinkx" gradientUnits="userSpaceOnUse" x1="0" y1="0" x2="2880" y2="0">
<stop offset="0.118" stop-color="#dc3aac" stop-opacity="0"/><stop offset="0.16" stop-color="#dc3aac" stop-opacity="1"/>
<stop offset="0.49" stop-color="#dc3aac" stop-opacity="1"/><stop offset="0.54" stop-color="#dc3aac" stop-opacity="0"/>
</linearGradient>
<linearGradient id="dkx" gradientUnits="userSpaceOnUse" x1="0" y1="0" x2="2880" y2="0"><stop offset="0.15" stop-color="#8c0c02" stop-opacity="0"/><stop offset="0.26" stop-color="#8c0c02" stop-opacity="0.85"/><stop offset="0.62" stop-color="#8c0c02" stop-opacity="0.8"/><stop offset="0.8" stop-color="#8c0c02" stop-opacity="0.45"/><stop offset="1" stop-color="#8c0c02" stop-opacity="0.2"/></linearGradient>
<linearGradient id="redx" gradientUnits="userSpaceOnUse" x1="0" y1="0" x2="2880" y2="0">
<stop offset="0.118" stop-color="#cc3c38" stop-opacity="0"/><stop offset="0.16" stop-color="#cc3c38" stop-opacity="1"/>
<stop offset="0.52" stop-color="#cc3c38" stop-opacity="1"/><stop offset="0.56" stop-color="#cc3c38" stop-opacity="0"/>
</linearGradient>
<linearGradient id="brx" gradientUnits="userSpaceOnUse" x1="0" y1="0" x2="2880" y2="0"><stop offset="0.9" stop-color="#e24a28" stop-opacity="1"/><stop offset="0.965" stop-color="#e24a28" stop-opacity="0"/></linearGradient>
<linearGradient id="tlx" gradientUnits="userSpaceOnUse" x1="0" y1="0" x2="2880" y2="0"><stop offset="0" stop-color="#800c06" stop-opacity="0.8"/><stop offset="0.8" stop-color="#800c06" stop-opacity="0.75"/><stop offset="0.95" stop-color="#800c06" stop-opacity="0.4"/></linearGradient>
<linearGradient id="cpink" gradientUnits="userSpaceOnUse" x1="0" y1="0" x2="2880" y2="0">
<stop offset="0.09" stop-color="#d636b0" stop-opacity="0"/><stop offset="0.125" stop-color="#d636b0" stop-opacity="1"/>
<stop offset="0.84" stop-color="#d636b0" stop-opacity="1"/><stop offset="0.88" stop-color="#d636b0" stop-opacity="0"/>
</linearGradient>
<linearGradient id="darky" gradientUnits="userSpaceOnUse" x1="0" y1="546.7" x2="0" y2="986.7">
<stop offset="0" stop-color="#4a1002" stop-opacity="0.72"/><stop offset="0.55" stop-color="#4a1002" stop-opacity="0.68"/>
<stop offset="1" stop-color="#4a1002" stop-opacity="0.15"/>
</linearGradient>
</defs>
<g clip-path="url(#cOut)">
<rect x="60" y="520" width="2760" height="940" fill="#c63b1b"/>
<g clip-path="url(#cBot)"><rect x="60" y="986.7" width="2760" height="500" fill="url(#brx)"/></g>
<g clip-path="url(#cIn)">
<rect x="60" y="520" width="2760" height="940" fill="#c63b1b"/>
<path d="M298.0,986.7 298.0,566.7 900.0,466.7 900.0,986.7 900.0,986.7 900.0,1506.7 298.0,1406.7 298.0,986.7Z" fill="#c634b0" filter="url(#b40)"/>
<path d="M520.0,986.7 520.0,536.7 560.0,577.5 653.3,555.1 746.7,536.2 840.0,519.2 933.3,505.2 1026.7,494.7 1120.0,486.0 1213.3,479.0 1306.7,473.8 1400.0,470.8 1470.0,516.7 1558.0,574.7 1650.0,606.7 1737.0,629.7 1939.0,662.7 2100.0,686.7 2245.0,722.1 2410.7,785.0 2510.0,851.1 2553.0,916.7 2567.0,986.7 2567.0,986.7 2553.0,1056.7 2510.0,1122.3 2410.7,1188.4 2245.0,1251.3 2100.0,1286.7 1939.0,1310.7 1737.0,1343.7 1650.0,1366.7 1558.0,1398.7 1470.0,1456.7 1400.0,1502.6 1306.7,1499.6 1213.3,1494.4 1120.0,1487.4 1026.7,1478.7 933.3,1468.2 840.0,1454.2 746.7,1437.2 653.3,1418.3 560.0,1395.9 520.0,1436.7 520.0,986.7Z" fill="#c634b0" filter="url(#b25)"/>
<path d="M610.0,986.7 585.0,926.7 520.0,836.7 440.0,761.7 350.0,696.7 300.0,566.7 600.0,527.7 720.0,501.2 840.0,479.2 960.0,461.9 1080.0,449.6 1200.0,439.9 1290.0,506.7 1380.0,586.7 1500.0,651.7 1737.0,731.7 1939.0,778.7 2100.0,814.7 2270.0,861.7 2355.0,924.7 2385.0,986.7 2385.0,986.7 2355.0,1048.7 2270.0,1111.7 2100.0,1158.7 1939.0,1194.7 1737.0,1241.7 1500.0,1321.7 1380.0,1386.7 1290.0,1466.7 1200.0,1533.5 1080.0,1523.8 960.0,1511.5 840.0,1494.2 720.0,1472.2 600.0,1445.7 300.0,1406.7 350.0,1276.7 440.0,1211.7 520.0,1136.7 585.0,1046.7 610.0,986.7Z" fill="#9d38c3" filter="url(#b55)"/>
<g clip-path="url(#cL1939)"><path d="M700.0,986.7 700.0,566.7 740.0,497.5 820.0,482.7 900.0,469.7 980.0,459.6 1040.0,506.7 1100.0,614.7 1364.0,724.7 1629.0,858.7 1939.5,974.7 1939.5,986.7Z" fill="#803dc5" filter="url(#b45)"/>
<path d="M700.0,986.7 700.0,1406.7 740.0,1475.9 840.0,1494.2 940.0,1509.1 1040.0,1520.0 1090.0,1466.7 1160.0,1306.7 1364.0,1218.7 1629.0,1098.7 1939.5,998.7 1939.5,986.7Z" fill="#803dc5" filter="url(#b45)"/></g>
<path d="M400.0,649.3 436.1,637.4 472.2,626.4 508.3,616.4 544.3,607.4 580.4,599.1 616.5,591.3 652.6,583.8 688.7,576.5 724.8,569.3 760.9,562.4 797.0,555.9 833.0,550.0 869.1,545.1 905.2,541.0 941.3,537.8 977.4,535.1 1013.5,532.9 1049.6,530.8 1085.7,528.8 1121.7,527.1 1157.8,525.5 1193.9,524.2 1230.0,523.1 1230.0,583.1 1193.9,608.3 1157.8,621.9 1121.7,633.1 1085.7,642.9 1049.6,651.5 1013.5,659.1 977.4,666.0 941.3,672.3 905.2,678.2 869.1,684.0 833.0,689.9 797.0,695.8 760.9,701.4 724.8,706.5 688.7,711.0 652.6,714.7 616.5,717.5 580.4,719.7 544.3,721.4 508.3,722.5 472.2,722.9 436.1,721.6 400.0,709.3Z" fill="#4058cb" filter="url(#b40)"/>
<path d="M420.0,1330.8 459.6,1343.2 499.1,1354.5 538.7,1364.7 578.3,1373.9 617.8,1382.4 657.4,1390.6 697.0,1398.5 736.5,1406.4 776.1,1413.8 815.7,1420.7 855.2,1426.5 894.8,1431.3 934.3,1435.0 973.9,1438.0 1013.5,1440.5 1053.0,1442.8 1092.6,1444.9 1132.2,1446.8 1171.7,1448.5 1211.3,1449.8 1250.9,1450.7 1290.4,1451.3 1330.0,1451.6 1330.0,1391.6 1290.4,1364.7 1250.9,1350.6 1211.3,1339.1 1171.7,1329.1 1132.2,1320.1 1092.6,1312.0 1053.0,1304.8 1013.5,1298.6 973.9,1293.1 934.3,1288.1 894.8,1283.4 855.2,1278.7 815.7,1273.8 776.1,1268.9 736.5,1264.4 697.0,1260.6 657.4,1257.7 617.8,1255.7 578.3,1254.4 538.7,1254.0 499.1,1254.4 459.6,1256.6 420.0,1270.8Z" fill="#4058cb" filter="url(#b40)"/>
<path d="M575.0,600.3 597.0,595.4 618.9,590.8 640.9,586.2 662.8,581.7 684.8,577.3 706.7,572.9 728.7,568.6 750.7,564.3 772.6,560.2 794.6,556.3 816.5,552.6 838.5,549.2 860.4,546.2 882.4,543.5 904.3,541.1 926.3,539.1 948.3,537.2 970.2,535.6 992.2,534.2 1014.1,532.8 1036.1,531.6 1058.0,530.3 1080.0,529.1 1080.0,589.1 1058.0,600.6 1036.1,607.0 1014.1,612.4 992.2,617.1 970.2,621.4 948.3,625.4 926.3,629.2 904.3,632.8 882.4,636.3 860.4,639.7 838.5,643.2 816.5,646.5 794.6,649.8 772.6,653.0 750.7,656.0 728.7,658.7 706.7,661.1 684.8,663.1 662.8,664.7 640.9,665.8 618.9,666.2 597.0,665.7 575.0,660.3Z" fill="#1a70d0" filter="url(#b18)"/>
<path d="M600.0,1378.6 625.2,1384.0 650.4,1389.1 675.7,1394.2 700.9,1399.3 726.1,1404.3 751.3,1409.2 776.5,1413.9 801.7,1418.4 827.0,1422.4 852.2,1426.1 877.4,1429.3 902.6,1432.1 927.8,1434.5 953.0,1436.5 978.3,1438.3 1003.5,1439.9 1028.7,1441.4 1053.9,1442.8 1079.1,1444.2 1104.3,1445.5 1129.6,1446.7 1154.8,1447.8 1180.0,1448.8 1180.0,1388.8 1154.8,1376.3 1129.6,1369.4 1104.3,1363.6 1079.1,1358.6 1053.9,1354.0 1028.7,1349.9 1003.5,1346.3 978.3,1342.9 953.0,1339.9 927.8,1337.0 902.6,1334.2 877.4,1331.4 852.2,1328.6 827.0,1325.8 801.7,1323.0 776.5,1320.3 751.3,1317.7 726.1,1315.5 700.9,1313.6 675.7,1312.4 650.4,1311.8 625.2,1312.5 600.0,1318.6Z" fill="#1a70d0" filter="url(#b18)"/>
<path d="M250,977.7L700,973.7L1900,973.7L2560,980.7V992.7L1900,999.7L700,999.7L250,995.7Z" fill="url(#cpink)" filter="url(#b5)"/>
<path d="M70,981.2H1450L1950,984.7L2520,985.2L2800,985.2V988.2L2520,988.2L1950,988.7L1450,992.2H70Z" fill="#cb3c2e" filter="url(#b3)"/>
<path d="M80.0,986.7 80.0,926.7 80.5,884.7 83.2,877.8 86.7,871.4 91.1,865.4 96.1,859.8 101.6,854.7 107.3,849.8 113.2,845.2 119.2,840.8 125.3,836.6 131.4,832.6 137.7,828.7 143.9,824.9 150.2,821.0 156.6,817.2 162.9,813.5 169.3,809.7 175.7,806.0 182.1,802.3 188.5,798.6 194.9,795.0 201.4,791.4 207.9,787.9 214.4,784.4 221.0,780.9 227.6,777.6 234.2,774.3 240.8,771.0 247.5,767.9 254.2,764.8 261.0,761.7 267.7,758.8 274.5,755.9 281.3,753.0 288.2,750.2 295.0,747.4 301.9,744.7 308.8,742.1 315.7,739.4 322.6,736.8 329.6,734.2 336.5,731.7 343.5,729.2 350.4,726.7 357.4,724.2 364.4,721.7 371.3,719.2 378.3,716.8 385.3,714.4 392.3,711.9 399.3,709.6 406.3,707.2 413.3,704.8 420.3,702.5 427.3,700.2 434.4,698.0 441.4,695.7 448.5,693.5 455.5,691.4 462.6,689.2 469.7,687.1 476.8,685.1 483.9,683.1 491.0,681.1 498.1,679.1 505.3,677.2 512.4,675.3 519.6,673.5 526.8,671.7 533.9,669.9 541.1,668.2 548.3,666.4 555.5,664.7 562.7,663.1 569.9,661.4 577.1,659.8 584.3,658.2 591.6,656.6 598.8,655.0 606.0,653.5 613.2,652.0 620.5,650.4 627.7,648.9 634.9,647.4 642.2,645.9 649.4,644.5 656.7,643.0 663.9,641.5 671.1,640.1 678.4,638.6 685.6,637.2 692.9,635.7 700.1,634.2 707.4,632.8 714.6,631.3 721.9,629.9 729.1,628.5 736.4,627.1 743.7,625.7 750.9,624.3 758.2,622.9 765.5,621.5 772.7,620.2 780.0,618.8 787.3,617.5 794.6,616.3 801.8,615.0 809.1,613.8 816.4,612.6 823.7,611.5 831.0,610.3 838.3,609.2 845.6,608.2 852.9,607.2 860.3,606.2 867.6,605.2 874.9,604.3 882.3,603.5 889.6,602.7 896.9,601.9 904.3,601.1 911.7,600.4 919.0,599.7 926.4,599.1 933.7,598.4 941.1,597.8 948.5,597.2 955.8,596.7 963.2,596.1 970.6,595.6 978.0,595.1 985.3,594.6 992.7,594.1 1000.1,593.7 1007.5,593.2 1014.9,592.8 1022.3,592.3 1029.6,591.9 1037.0,591.5 1044.4,591.1 1051.8,590.7 1059.2,590.3 1066.6,589.9 1073.9,589.5 1081.3,589.1 1088.7,588.7 1096.1,588.3 1103.5,587.9 1110.8,587.6 1118.2,587.2 1125.6,586.9 1133.0,586.5 1140.4,586.2 1147.8,585.9 1155.1,585.6 1162.5,585.3 1169.9,585.0 1177.3,584.7 1184.7,584.5 1192.1,584.2 1199.4,584.0 1206.8,583.8 1214.2,583.5 1221.6,583.3 1229.0,583.2 1236.4,583.0 1243.8,582.8 1251.1,582.7 1258.5,582.6 1265.9,582.4 1273.3,582.3 1280.7,582.2 1288.1,582.1 1295.5,582.1 1302.9,582.0 1310.3,581.9 1317.6,581.9 1325.0,581.8 1332.4,581.8 1339.8,581.8 1347.2,581.7 1354.6,581.7 1362.0,581.7 1369.4,581.7 1376.8,581.7 1384.2,581.7 1391.6,581.7 1399.0,581.7 1406.3,581.7 1413.7,581.7 1421.1,581.7 1428.5,581.7 1435.9,581.8 1443.3,581.8 1450.7,581.8 1458.1,581.9 1465.5,581.9 1472.9,582.0 1480.3,582.0 1487.6,582.1 1495.0,582.2 1502.4,582.3 1509.8,582.4 1517.2,582.5 1524.6,582.7 1532.0,582.8 1539.4,583.0 1546.8,583.2 1554.1,583.4 1561.5,583.6 1568.9,583.8 1576.3,584.1 1583.7,584.3 1591.1,584.6 1598.5,584.9 1605.8,585.2 1613.2,585.6 1620.6,585.9 1628.0,586.3 1635.4,586.6 1642.7,587.0 1650.1,587.4 1657.5,587.8 1664.9,588.3 1672.3,588.7 1679.6,589.2 1687.0,589.6 1694.4,590.1 1701.8,590.6 1709.1,591.1 1716.5,591.6 1723.9,592.1 1731.3,592.6 1738.6,593.1 1746.0,593.7 1753.4,594.2 1760.7,594.7 1768.1,595.3 1775.5,595.9 1782.8,596.4 1790.2,597.0 1797.6,597.6 1804.9,598.2 1812.3,598.8 1819.7,599.4 1827.0,600.0 1834.4,600.6 1841.8,601.3 1849.1,601.9 1856.5,602.5 1863.9,603.2 1871.2,603.8 1878.6,604.5 1885.9,605.1 1893.3,605.8 1900.7,606.4 1908.0,607.1 1915.4,607.8 1922.7,608.5 1930.1,609.1 1937.5,609.8 1944.8,610.5 1952.2,611.2 1959.5,611.9 1966.9,612.6 1974.3,613.3 1981.6,614.0 1989.0,614.7 1996.3,615.4 2003.7,616.2 2011.0,616.9 2018.4,617.7 2025.7,618.5 2033.1,619.2 2040.4,620.0 2047.8,620.9 2055.1,621.7 2062.5,622.5 2069.8,623.4 2077.1,624.3 2084.5,625.2 2091.8,626.1 2099.1,627.1 2106.5,628.1 2113.8,629.1 2121.1,630.1 2128.4,631.1 2135.7,632.1 2143.0,633.2 2150.3,634.3 2157.7,635.4 2165.0,636.5 2172.3,637.6 2179.6,638.8 2186.9,639.9 2194.2,641.0 2201.5,642.2 2208.8,643.3 2216.1,644.5 2223.4,645.7 2230.7,646.8 2238.0,648.0 2245.3,649.1 2252.6,650.3 2259.9,651.5 2267.2,652.6 2274.5,653.8 2281.8,654.9 2289.1,656.1 2296.4,657.3 2303.7,658.5 2311.0,659.7 2318.2,660.9 2325.5,662.2 2332.8,663.4 2340.1,664.7 2347.4,666.0 2354.6,667.3 2361.9,668.7 2369.2,670.1 2376.4,671.5 2383.7,672.9 2390.9,674.4 2398.1,676.0 2405.4,677.5 2412.6,679.1 2419.8,680.8 2427.0,682.5 2434.2,684.2 2441.4,686.0 2448.6,687.8 2455.7,689.7 2462.9,691.6 2470.0,693.5 2477.2,695.5 2484.3,697.5 2491.4,699.6 2498.5,701.7 2505.6,703.8 2512.7,706.0 2519.7,708.2 2526.8,710.4 2533.8,712.7 2540.8,715.0 2547.8,717.4 2554.8,719.7 2561.8,722.1 2568.7,724.6 2575.7,727.1 2582.6,729.6 2589.5,732.1 2596.4,734.7 2603.3,737.3 2610.1,740.0 2617.0,742.6 2623.8,745.4 2630.7,748.1 2637.5,750.9 2644.4,753.7 2651.2,756.6 2658.0,759.5 2664.9,762.4 2671.7,765.4 2678.6,768.4 2685.4,771.4 2692.2,774.6 2699.0,777.8 2705.6,781.3 2712.2,784.8 2718.5,788.6 2724.8,792.6 2730.8,796.9 2736.5,801.4 2742.0,806.3 2747.3,811.5 2752.2,817.0 2756.8,822.9 2761.1,829.0 2765.0,835.3 2768.6,841.8 2771.9,848.5 2774.8,855.3 2777.4,862.3 2779.6,869.3 2781.6,876.5 2783.3,883.7 2784.8,890.9 2786.1,898.3 2787.2,905.6 2788.2,912.9 2789.0,920.3 2789.7,927.7 2790.3,935.0 2790.9,942.4 2791.3,949.8 2791.7,957.2 2792.0,964.5 2792.3,971.9 2792.6,979.3 2792.8,986.7 2792.6,994.1 2792.3,1001.5 2792.0,1008.9 2791.7,1016.2 2791.3,1023.6 2790.9,1031.0 2790.3,1038.4 2789.7,1045.7 2789.0,1053.1 2788.2,1060.5 2787.2,1067.8 2786.1,1075.1 2784.8,1082.5 2783.3,1089.7 2781.6,1096.9 2779.6,1104.1 2777.4,1111.1 2774.8,1118.1 2771.9,1124.9 2768.6,1131.6 2765.0,1138.1 2761.1,1144.4 2756.8,1150.5 2752.2,1156.4 2747.3,1161.9 2742.0,1167.1 2736.5,1172.0 2730.8,1176.5 2724.8,1180.8 2718.5,1184.8 2712.2,1188.6 2705.6,1192.1 2699.0,1195.6 2692.2,1198.8 2685.4,1202.0 2678.6,1205.0 2671.7,1208.0 2664.9,1211.0 2658.0,1213.9 2651.2,1216.8 2644.4,1219.7 2637.5,1222.5 2630.7,1225.3 2623.8,1228.0 2617.0,1230.8 2610.1,1233.4 2603.3,1236.1 2596.4,1238.7 2589.5,1241.3 2582.6,1243.8 2575.7,1246.3 2568.7,1248.8 2561.8,1251.3 2554.8,1253.7 2547.8,1256.0 2540.8,1258.4 2533.8,1260.7 2526.8,1263.0 2519.7,1265.2 2512.7,1267.4 2505.6,1269.6 2498.5,1271.7 2491.4,1273.8 2484.3,1275.9 2477.2,1277.9 2470.0,1279.9 2462.9,1281.8 2455.7,1283.7 2448.6,1285.6 2441.4,1287.4 2434.2,1289.2 2427.0,1290.9 2419.8,1292.6 2412.6,1294.3 2405.4,1295.9 2398.1,1297.4 2390.9,1299.0 2383.7,1300.5 2376.4,1301.9 2369.2,1303.3 2361.9,1304.7 2354.6,1306.1 2347.4,1307.4 2340.1,1308.7 2332.8,1310.0 2325.5,1311.2 2318.2,1312.5 2311.0,1313.7 2303.7,1314.9 2296.4,1316.1 2289.1,1317.3 2281.8,1318.5 2274.5,1319.6 2267.2,1320.8 2259.9,1321.9 2252.6,1323.1 2245.3,1324.3 2238.0,1325.4 2230.7,1326.6 2223.4,1327.7 2216.1,1328.9 2208.8,1330.1 2201.5,1331.2 2194.2,1332.4 2186.9,1333.5 2179.6,1334.6 2172.3,1335.8 2165.0,1336.9 2157.7,1338.0 2150.3,1339.1 2143.0,1340.2 2135.7,1341.3 2128.4,1342.3 2121.1,1343.3 2113.8,1344.3 2106.5,1345.3 2099.1,1346.3 2091.8,1347.3 2084.5,1348.2 2077.1,1349.1 2069.8,1350.0 2062.5,1350.9 2055.1,1351.7 2047.8,1352.5 2040.4,1353.4 2033.1,1354.2 2025.7,1354.9 2018.4,1355.7 2011.0,1356.5 2003.7,1357.2 1996.3,1358.0 1989.0,1358.7 1981.6,1359.4 1974.3,1360.1 1966.9,1360.8 1959.5,1361.5 1952.2,1362.2 1944.8,1362.9 1937.5,1363.6 1930.1,1364.3 1922.7,1364.9 1915.4,1365.6 1908.0,1366.3 1900.7,1367.0 1893.3,1367.6 1885.9,1368.3 1878.6,1368.9 1871.2,1369.6 1863.9,1370.2 1856.5,1370.9 1849.1,1371.5 1841.8,1372.1 1834.4,1372.8 1827.0,1373.4 1819.7,1374.0 1812.3,1374.6 1804.9,1375.2 1797.6,1375.8 1790.2,1376.4 1782.8,1377.0 1775.5,1377.5 1768.1,1378.1 1760.7,1378.7 1753.4,1379.2 1746.0,1379.7 1738.6,1380.3 1731.3,1380.8 1723.9,1381.3 1716.5,1381.8 1709.1,1382.3 1701.8,1382.8 1694.4,1383.3 1687.0,1383.8 1679.6,1384.2 1672.3,1384.7 1664.9,1385.1 1657.5,1385.6 1650.1,1386.0 1642.7,1386.4 1635.4,1386.8 1628.0,1387.1 1620.6,1387.5 1613.2,1387.8 1605.8,1388.2 1598.5,1388.5 1591.1,1388.8 1583.7,1389.1 1576.3,1389.3 1568.9,1389.6 1561.5,1389.8 1554.1,1390.0 1546.8,1390.2 1539.4,1390.4 1532.0,1390.6 1524.6,1390.7 1517.2,1390.9 1509.8,1391.0 1502.4,1391.1 1495.0,1391.2 1487.6,1391.3 1480.3,1391.4 1472.9,1391.4 1465.5,1391.5 1458.1,1391.5 1450.7,1391.6 1443.3,1391.6 1435.9,1391.6 1428.5,1391.7 1421.1,1391.7 1413.7,1391.7 1406.3,1391.7 1399.0,1391.7 1391.6,1391.7 1384.2,1391.7 1376.8,1391.7 1369.4,1391.7 1362.0,1391.7 1354.6,1391.7 1347.2,1391.7 1339.8,1391.6 1332.4,1391.6 1325.0,1391.6 1317.6,1391.5 1310.3,1391.5 1302.9,1391.4 1295.5,1391.3 1288.1,1391.3 1280.7,1391.2 1273.3,1391.1 1265.9,1391.0 1258.5,1390.8 1251.1,1390.7 1243.8,1390.6 1236.4,1390.4 1229.0,1390.2 1221.6,1390.1 1214.2,1389.9 1206.8,1389.6 1199.4,1389.4 1192.1,1389.2 1184.7,1388.9 1177.3,1388.7 1169.9,1388.4 1162.5,1388.1 1155.1,1387.8 1147.8,1387.5 1140.4,1387.2 1133.0,1386.9 1125.6,1386.5 1118.2,1386.2 1110.8,1385.8 1103.5,1385.5 1096.1,1385.1 1088.7,1384.7 1081.3,1384.3 1073.9,1383.9 1066.6,1383.5 1059.2,1383.1 1051.8,1382.7 1044.4,1382.3 1037.0,1381.9 1029.6,1381.5 1022.3,1381.1 1014.9,1380.6 1007.5,1380.2 1000.1,1379.7 992.7,1379.3 985.3,1378.8 978.0,1378.3 970.6,1377.8 963.2,1377.3 955.8,1376.7 948.5,1376.2 941.1,1375.6 933.7,1375.0 926.4,1374.3 919.0,1373.7 911.7,1373.0 904.3,1372.3 896.9,1371.5 889.6,1370.7 882.3,1369.9 874.9,1369.1 867.6,1368.2 860.3,1367.2 852.9,1366.2 845.6,1365.2 838.3,1364.2 831.0,1363.1 823.7,1361.9 816.4,1360.8 809.1,1359.6 801.8,1358.4 794.6,1357.1 787.3,1355.9 780.0,1354.6 772.7,1353.2 765.5,1351.9 758.2,1350.5 750.9,1349.1 743.7,1347.7 736.4,1346.3 729.1,1344.9 721.9,1343.5 714.6,1342.1 707.4,1340.6 700.1,1339.2 692.9,1337.7 685.6,1336.2 678.4,1334.8 671.1,1333.3 663.9,1331.9 656.7,1330.4 649.4,1328.9 642.2,1327.5 634.9,1326.0 627.7,1324.5 620.5,1323.0 613.2,1321.4 606.0,1319.9 598.8,1318.4 591.6,1316.8 584.3,1315.2 577.1,1313.6 569.9,1312.0 562.7,1310.3 555.5,1308.7 548.3,1307.0 541.1,1305.2 533.9,1303.5 526.8,1301.7 519.6,1299.9 512.4,1298.1 505.3,1296.2 498.1,1294.3 491.0,1292.3 483.9,1290.3 476.8,1288.3 469.7,1286.3 462.6,1284.2 455.5,1282.0 448.5,1279.9 441.4,1277.7 434.4,1275.4 427.3,1273.2 420.3,1270.9 413.3,1268.6 406.3,1266.2 399.3,1263.8 392.3,1261.5 385.3,1259.0 378.3,1256.6 371.3,1254.2 364.4,1251.7 357.4,1249.2 350.4,1246.7 343.5,1244.2 336.5,1241.7 329.6,1239.2 322.6,1236.6 315.7,1234.0 308.8,1231.3 301.9,1228.7 295.0,1226.0 288.2,1223.2 281.3,1220.4 274.5,1217.5 267.7,1214.6 261.0,1211.7 254.2,1208.6 247.5,1205.5 240.8,1202.4 234.2,1199.1 227.6,1195.8 221.0,1192.5 214.4,1189.0 207.9,1185.5 201.4,1182.0 194.9,1178.4 188.5,1174.8 182.1,1171.1 175.7,1167.4 169.3,1163.7 162.9,1159.9 156.6,1156.2 150.2,1152.4 143.9,1148.5 137.7,1144.7 131.4,1140.8 125.3,1136.8 119.2,1132.6 113.2,1128.2 107.3,1123.6 101.6,1118.7 96.1,1113.6 91.1,1108.0 86.7,1102.0 83.2,1095.6 80.5,1088.7 80.0,1046.7Z" fill="none" stroke="url(#pinkx)" stroke-width="15" filter="url(#b2)"/>
<path d="M80.0,986.7 80.0,926.7 80.5,884.7 83.2,877.8 86.7,871.4 91.1,865.4 96.1,859.8 101.6,854.7 107.3,849.8 113.2,845.2 119.2,840.8 125.3,836.6 131.4,832.6 137.7,828.7 143.9,824.9 150.2,821.0 156.6,817.2 162.9,813.5 169.3,809.7 175.7,806.0 182.1,802.3 188.5,798.6 194.9,795.0 201.4,791.4 207.9,787.9 214.4,784.4 221.0,780.9 227.6,777.6 234.2,774.3 240.8,771.0 247.5,767.9 254.2,764.8 261.0,761.7 267.7,758.8 274.5,755.9 281.3,753.0 288.2,750.2 295.0,747.4 301.9,744.7 308.8,742.1 315.7,739.4 322.6,736.8 329.6,734.2 336.5,731.7 343.5,729.2 350.4,726.7 357.4,724.2 364.4,721.7 371.3,719.2 378.3,716.8 385.3,714.4 392.3,711.9 399.3,709.6 406.3,707.2 413.3,704.8 420.3,702.5 427.3,700.2 434.4,698.0 441.4,695.7 448.5,693.5 455.5,691.4 462.6,689.2 469.7,687.1 476.8,685.1 483.9,683.1 491.0,681.1 498.1,679.1 505.3,677.2 512.4,675.3 519.6,673.5 526.8,671.7 533.9,669.9 541.1,668.2 548.3,666.4 555.5,664.7 562.7,663.1 569.9,661.4 577.1,659.8 584.3,658.2 591.6,656.6 598.8,655.0 606.0,653.5 613.2,652.0 620.5,650.4 627.7,648.9 634.9,647.4 642.2,645.9 649.4,644.5 656.7,643.0 663.9,641.5 671.1,640.1 678.4,638.6 685.6,637.2 692.9,635.7 700.1,634.2 707.4,632.8 714.6,631.3 721.9,629.9 729.1,628.5 736.4,627.1 743.7,625.7 750.9,624.3 758.2,622.9 765.5,621.5 772.7,620.2 780.0,618.8 787.3,617.5 794.6,616.3 801.8,615.0 809.1,613.8 816.4,612.6 823.7,611.5 831.0,610.3 838.3,609.2 845.6,608.2 852.9,607.2 860.3,606.2 867.6,605.2 874.9,604.3 882.3,603.5 889.6,602.7 896.9,601.9 904.3,601.1 911.7,600.4 919.0,599.7 926.4,599.1 933.7,598.4 941.1,597.8 948.5,597.2 955.8,596.7 963.2,596.1 970.6,595.6 978.0,595.1 985.3,594.6 992.7,594.1 1000.1,593.7 1007.5,593.2 1014.9,592.8 1022.3,592.3 1029.6,591.9 1037.0,591.5 1044.4,591.1 1051.8,590.7 1059.2,590.3 1066.6,589.9 1073.9,589.5 1081.3,589.1 1088.7,588.7 1096.1,588.3 1103.5,587.9 1110.8,587.6 1118.2,587.2 1125.6,586.9 1133.0,586.5 1140.4,586.2 1147.8,585.9 1155.1,585.6 1162.5,585.3 1169.9,585.0 1177.3,584.7 1184.7,584.5 1192.1,584.2 1199.4,584.0 1206.8,583.8 1214.2,583.5 1221.6,583.3 1229.0,583.2 1236.4,583.0 1243.8,582.8 1251.1,582.7 1258.5,582.6 1265.9,582.4 1273.3,582.3 1280.7,582.2 1288.1,582.1 1295.5,582.1 1302.9,582.0 1310.3,581.9 1317.6,581.9 1325.0,581.8 1332.4,581.8 1339.8,581.8 1347.2,581.7 1354.6,581.7 1362.0,581.7 1369.4,581.7 1376.8,581.7 1384.2,581.7 1391.6,581.7 1399.0,581.7 1406.3,581.7 1413.7,581.7 1421.1,581.7 1428.5,581.7 1435.9,581.8 1443.3,581.8 1450.7,581.8 1458.1,581.9 1465.5,581.9 1472.9,582.0 1480.3,582.0 1487.6,582.1 1495.0,582.2 1502.4,582.3 1509.8,582.4 1517.2,582.5 1524.6,582.7 1532.0,582.8 1539.4,583.0 1546.8,583.2 1554.1,583.4 1561.5,583.6 1568.9,583.8 1576.3,584.1 1583.7,584.3 1591.1,584.6 1598.5,584.9 1605.8,585.2 1613.2,585.6 1620.6,585.9 1628.0,586.3 1635.4,586.6 1642.7,587.0 1650.1,587.4 1657.5,587.8 1664.9,588.3 1672.3,588.7 1679.6,589.2 1687.0,589.6 1694.4,590.1 1701.8,590.6 1709.1,591.1 1716.5,591.6 1723.9,592.1 1731.3,592.6 1738.6,593.1 1746.0,593.7 1753.4,594.2 1760.7,594.7 1768.1,595.3 1775.5,595.9 1782.8,596.4 1790.2,597.0 1797.6,597.6 1804.9,598.2 1812.3,598.8 1819.7,599.4 1827.0,600.0 1834.4,600.6 1841.8,601.3 1849.1,601.9 1856.5,602.5 1863.9,603.2 1871.2,603.8 1878.6,604.5 1885.9,605.1 1893.3,605.8 1900.7,606.4 1908.0,607.1 1915.4,607.8 1922.7,608.5 1930.1,609.1 1937.5,609.8 1944.8,610.5 1952.2,611.2 1959.5,611.9 1966.9,612.6 1974.3,613.3 1981.6,614.0 1989.0,614.7 1996.3,615.4 2003.7,616.2 2011.0,616.9 2018.4,617.7 2025.7,618.5 2033.1,619.2 2040.4,620.0 2047.8,620.9 2055.1,621.7 2062.5,622.5 2069.8,623.4 2077.1,624.3 2084.5,625.2 2091.8,626.1 2099.1,627.1 2106.5,628.1 2113.8,629.1 2121.1,630.1 2128.4,631.1 2135.7,632.1 2143.0,633.2 2150.3,634.3 2157.7,635.4 2165.0,636.5 2172.3,637.6 2179.6,638.8 2186.9,639.9 2194.2,641.0 2201.5,642.2 2208.8,643.3 2216.1,644.5 2223.4,645.7 2230.7,646.8 2238.0,648.0 2245.3,649.1 2252.6,650.3 2259.9,651.5 2267.2,652.6 2274.5,653.8 2281.8,654.9 2289.1,656.1 2296.4,657.3 2303.7,658.5 2311.0,659.7 2318.2,660.9 2325.5,662.2 2332.8,663.4 2340.1,664.7 2347.4,666.0 2354.6,667.3 2361.9,668.7 2369.2,670.1 2376.4,671.5 2383.7,672.9 2390.9,674.4 2398.1,676.0 2405.4,677.5 2412.6,679.1 2419.8,680.8 2427.0,682.5 2434.2,684.2 2441.4,686.0 2448.6,687.8 2455.7,689.7 2462.9,691.6 2470.0,693.5 2477.2,695.5 2484.3,697.5 2491.4,699.6 2498.5,701.7 2505.6,703.8 2512.7,706.0 2519.7,708.2 2526.8,710.4 2533.8,712.7 2540.8,715.0 2547.8,717.4 2554.8,719.7 2561.8,722.1 2568.7,724.6 2575.7,727.1 2582.6,729.6 2589.5,732.1 2596.4,734.7 2603.3,737.3 2610.1,740.0 2617.0,742.6 2623.8,745.4 2630.7,748.1 2637.5,750.9 2644.4,753.7 2651.2,756.6 2658.0,759.5 2664.9,762.4 2671.7,765.4 2678.6,768.4 2685.4,771.4 2692.2,774.6 2699.0,777.8 2705.6,781.3 2712.2,784.8 2718.5,788.6 2724.8,792.6 2730.8,796.9 2736.5,801.4 2742.0,806.3 2747.3,811.5 2752.2,817.0 2756.8,822.9 2761.1,829.0 2765.0,835.3 2768.6,841.8 2771.9,848.5 2774.8,855.3 2777.4,862.3 2779.6,869.3 2781.6,876.5 2783.3,883.7 2784.8,890.9 2786.1,898.3 2787.2,905.6 2788.2,912.9 2789.0,920.3 2789.7,927.7 2790.3,935.0 2790.9,942.4 2791.3,949.8 2791.7,957.2 2792.0,964.5 2792.3,971.9 2792.6,979.3 2792.8,986.7 2792.6,994.1 2792.3,1001.5 2792.0,1008.9 2791.7,1016.2 2791.3,1023.6 2790.9,1031.0 2790.3,1038.4 2789.7,1045.7 2789.0,1053.1 2788.2,1060.5 2787.2,1067.8 2786.1,1075.1 2784.8,1082.5 2783.3,1089.7 2781.6,1096.9 2779.6,1104.1 2777.4,1111.1 2774.8,1118.1 2771.9,1124.9 2768.6,1131.6 2765.0,1138.1 2761.1,1144.4 2756.8,1150.5 2752.2,1156.4 2747.3,1161.9 2742.0,1167.1 2736.5,1172.0 2730.8,1176.5 2724.8,1180.8 2718.5,1184.8 2712.2,1188.6 2705.6,1192.1 2699.0,1195.6 2692.2,1198.8 2685.4,1202.0 2678.6,1205.0 2671.7,1208.0 2664.9,1211.0 2658.0,1213.9 2651.2,1216.8 2644.4,1219.7 2637.5,1222.5 2630.7,1225.3 2623.8,1228.0 2617.0,1230.8 2610.1,1233.4 2603.3,1236.1 2596.4,1238.7 2589.5,1241.3 2582.6,1243.8 2575.7,1246.3 2568.7,1248.8 2561.8,1251.3 2554.8,1253.7 2547.8,1256.0 2540.8,1258.4 2533.8,1260.7 2526.8,1263.0 2519.7,1265.2 2512.7,1267.4 2505.6,1269.6 2498.5,1271.7 2491.4,1273.8 2484.3,1275.9 2477.2,1277.9 2470.0,1279.9 2462.9,1281.8 2455.7,1283.7 2448.6,1285.6 2441.4,1287.4 2434.2,1289.2 2427.0,1290.9 2419.8,1292.6 2412.6,1294.3 2405.4,1295.9 2398.1,1297.4 2390.9,1299.0 2383.7,1300.5 2376.4,1301.9 2369.2,1303.3 2361.9,1304.7 2354.6,1306.1 2347.4,1307.4 2340.1,1308.7 2332.8,1310.0 2325.5,1311.2 2318.2,1312.5 2311.0,1313.7 2303.7,1314.9 2296.4,1316.1 2289.1,1317.3 2281.8,1318.5 2274.5,1319.6 2267.2,1320.8 2259.9,1321.9 2252.6,1323.1 2245.3,1324.3 2238.0,1325.4 2230.7,1326.6 2223.4,1327.7 2216.1,1328.9 2208.8,1330.1 2201.5,1331.2 2194.2,1332.4 2186.9,1333.5 2179.6,1334.6 2172.3,1335.8 2165.0,1336.9 2157.7,1338.0 2150.3,1339.1 2143.0,1340.2 2135.7,1341.3 2128.4,1342.3 2121.1,1343.3 2113.8,1344.3 2106.5,1345.3 2099.1,1346.3 2091.8,1347.3 2084.5,1348.2 2077.1,1349.1 2069.8,1350.0 2062.5,1350.9 2055.1,1351.7 2047.8,1352.5 2040.4,1353.4 2033.1,1354.2 2025.7,1354.9 2018.4,1355.7 2011.0,1356.5 2003.7,1357.2 1996.3,1358.0 1989.0,1358.7 1981.6,1359.4 1974.3,1360.1 1966.9,1360.8 1959.5,1361.5 1952.2,1362.2 1944.8,1362.9 1937.5,1363.6 1930.1,1364.3 1922.7,1364.9 1915.4,1365.6 1908.0,1366.3 1900.7,1367.0 1893.3,1367.6 1885.9,1368.3 1878.6,1368.9 1871.2,1369.6 1863.9,1370.2 1856.5,1370.9 1849.1,1371.5 1841.8,1372.1 1834.4,1372.8 1827.0,1373.4 1819.7,1374.0 1812.3,1374.6 1804.9,1375.2 1797.6,1375.8 1790.2,1376.4 1782.8,1377.0 1775.5,1377.5 1768.1,1378.1 1760.7,1378.7 1753.4,1379.2 1746.0,1379.7 1738.6,1380.3 1731.3,1380.8 1723.9,1381.3 1716.5,1381.8 1709.1,1382.3 1701.8,1382.8 1694.4,1383.3 1687.0,1383.8 1679.6,1384.2 1672.3,1384.7 1664.9,1385.1 1657.5,1385.6 1650.1,1386.0 1642.7,1386.4 1635.4,1386.8 1628.0,1387.1 1620.6,1387.5 1613.2,1387.8 1605.8,1388.2 1598.5,1388.5 1591.1,1388.8 1583.7,1389.1 1576.3,1389.3 1568.9,1389.6 1561.5,1389.8 1554.1,1390.0 1546.8,1390.2 1539.4,1390.4 1532.0,1390.6 1524.6,1390.7 1517.2,1390.9 1509.8,1391.0 1502.4,1391.1 1495.0,1391.2 1487.6,1391.3 1480.3,1391.4 1472.9,1391.4 1465.5,1391.5 1458.1,1391.5 1450.7,1391.6 1443.3,1391.6 1435.9,1391.6 1428.5,1391.7 1421.1,1391.7 1413.7,1391.7 1406.3,1391.7 1399.0,1391.7 1391.6,1391.7 1384.2,1391.7 1376.8,1391.7 1369.4,1391.7 1362.0,1391.7 1354.6,1391.7 1347.2,1391.7 1339.8,1391.6 1332.4,1391.6 1325.0,1391.6 1317.6,1391.5 1310.3,1391.5 1302.9,1391.4 1295.5,1391.3 1288.1,1391.3 1280.7,1391.2 1273.3,1391.1 1265.9,1391.0 1258.5,1390.8 1251.1,1390.7 1243.8,1390.6 1236.4,1390.4 1229.0,1390.2 1221.6,1390.1 1214.2,1389.9 1206.8,1389.6 1199.4,1389.4 1192.1,1389.2 1184.7,1388.9 1177.3,1388.7 1169.9,1388.4 1162.5,1388.1 1155.1,1387.8 1147.8,1387.5 1140.4,1387.2 1133.0,1386.9 1125.6,1386.5 1118.2,1386.2 1110.8,1385.8 1103.5,1385.5 1096.1,1385.1 1088.7,1384.7 1081.3,1384.3 1073.9,1383.9 1066.6,1383.5 1059.2,1383.1 1051.8,1382.7 1044.4,1382.3 1037.0,1381.9 1029.6,1381.5 1022.3,1381.1 1014.9,1380.6 1007.5,1380.2 1000.1,1379.7 992.7,1379.3 985.3,1378.8 978.0,1378.3 970.6,1377.8 963.2,1377.3 955.8,1376.7 948.5,1376.2 941.1,1375.6 933.7,1375.0 926.4,1374.3 919.0,1373.7 911.7,1373.0 904.3,1372.3 896.9,1371.5 889.6,1370.7 882.3,1369.9 874.9,1369.1 867.6,1368.2 860.3,1367.2 852.9,1366.2 845.6,1365.2 838.3,1364.2 831.0,1363.1 823.7,1361.9 816.4,1360.8 809.1,1359.6 801.8,1358.4 794.6,1357.1 787.3,1355.9 780.0,1354.6 772.7,1353.2 765.5,1351.9 758.2,1350.5 750.9,1349.1 743.7,1347.7 736.4,1346.3 729.1,1344.9 721.9,1343.5 714.6,1342.1 707.4,1340.6 700.1,1339.2 692.9,1337.7 685.6,1336.2 678.4,1334.8 671.1,1333.3 663.9,1331.9 656.7,1330.4 649.4,1328.9 642.2,1327.5 634.9,1326.0 627.7,1324.5 620.5,1323.0 613.2,1321.4 606.0,1319.9 598.8,1318.4 591.6,1316.8 584.3,1315.2 577.1,1313.6 569.9,1312.0 562.7,1310.3 555.5,1308.7 548.3,1307.0 541.1,1305.2 533.9,1303.5 526.8,1301.7 519.6,1299.9 512.4,1298.1 505.3,1296.2 498.1,1294.3 491.0,1292.3 483.9,1290.3 476.8,1288.3 469.7,1286.3 462.6,1284.2 455.5,1282.0 448.5,1279.9 441.4,1277.7 434.4,1275.4 427.3,1273.2 420.3,1270.9 413.3,1268.6 406.3,1266.2 399.3,1263.8 392.3,1261.5 385.3,1259.0 378.3,1256.6 371.3,1254.2 364.4,1251.7 357.4,1249.2 350.4,1246.7 343.5,1244.2 336.5,1241.7 329.6,1239.2 322.6,1236.6 315.7,1234.0 308.8,1231.3 301.9,1228.7 295.0,1226.0 288.2,1223.2 281.3,1220.4 274.5,1217.5 267.7,1214.6 261.0,1211.7 254.2,1208.6 247.5,1205.5 240.8,1202.4 234.2,1199.1 227.6,1195.8 221.0,1192.5 214.4,1189.0 207.9,1185.5 201.4,1182.0 194.9,1178.4 188.5,1174.8 182.1,1171.1 175.7,1167.4 169.3,1163.7 162.9,1159.9 156.6,1156.2 150.2,1152.4 143.9,1148.5 137.7,1144.7 131.4,1140.8 125.3,1136.8 119.2,1132.6 113.2,1128.2 107.3,1123.6 101.6,1118.7 96.1,1113.6 91.1,1108.0 86.7,1102.0 83.2,1095.6 80.5,1088.7 80.0,1046.7Z" fill="none" stroke="url(#redx)" stroke-width="6.5" filter="url(#b1)"/>
</g>
<g clip-path="url(#cTop)"><path d="M303.2,739.0 310.2,736.2 317.1,733.5 324.1,730.7 331.2,728.0 338.2,725.4 345.2,722.7 352.3,720.1 359.3,717.5 366.4,714.9 373.4,712.3 380.5,709.7 387.6,707.2 394.7,704.7 401.7,702.2 408.8,699.7 416.0,697.3 423.1,694.8 430.2,692.4 437.3,690.1 444.5,687.7 451.6,685.4 458.8,683.2 462.4,682.0 469.6,679.7 476.8,677.5 484.0,675.4 491.2,673.2 498.4,671.2 505.6,669.1 512.9,667.0 520.1,665.0 527.4,663.0 534.6,661.1 541.9,659.1 549.1,657.2 556.4,655.3 563.7,653.4 571.0,651.5 578.2,649.6 585.5,647.7 592.8,645.9 600.1,644.0 607.4,642.1 614.7,640.3 622.0,638.4 629.3,636.6 636.6,634.8 643.9,633.0 651.2,631.3 658.5,629.6 665.8,627.9 673.2,626.2 680.5,624.6 687.8,623.1 695.2,621.5 702.6,620.1 709.9,618.6 717.3,617.2 724.7,615.8 732.1,614.5 739.5,613.1 746.9,611.8 754.3,610.4 761.7,609.1 769.1,607.7 776.5,606.4 783.9,605.0 791.2,603.6 798.6,602.2 806.0,600.8 813.4,599.3 820.8,597.9 828.2,596.5 835.5,595.1 842.9,593.7 850.3,592.3 857.7,590.9 865.1,589.6 872.5,588.3 879.9,587.0 887.3,585.7 894.8,584.5 902.2,583.3 909.6,582.1 917.0,581.0 924.5,579.8 931.9,578.7 939.4,577.6 946.8,576.5 954.3,575.5 961.7,574.4 969.2,573.4 976.6,572.4 984.1,571.4 991.5,570.4 999.0,569.5 1006.5,568.5 1013.9,567.6 1021.4,566.7 1028.9,565.8 1036.3,564.9 1043.8,564.0 1051.3,563.1 1058.7,562.2 1066.2,561.4 1073.7,560.5 1081.2,559.7 1088.6,558.9 1096.1,558.0 1103.6,557.2 1111.1,556.4 1118.5,555.6 1126.0,554.9 1133.5,554.1 1141.0,553.4 1148.5,552.6 1156.0,551.9 1163.4,551.2 1170.9,550.5 1178.4,549.8 1185.9,549.1 1193.4,548.4 1200.9,547.8 1208.4,547.1 1215.9,546.5 1223.4,545.8 1230.9,545.2 1238.4,544.6 1245.9,544.0 1253.4,543.5 1260.9,542.9 1268.4,542.4 1275.9,541.8 1283.4,541.3 1290.9,540.8 1298.4,540.3 1305.9,539.9 1313.4,539.4 1320.9,539.0 1328.4,538.5 1335.9,538.1 1343.4,537.7 1350.9,537.4 1358.4,537.0 1366.0,536.7 1373.5,536.4 1381.0,536.1 1388.5,535.8 1396.0,535.5 1403.5,535.3 1411.0,535.1 1418.6,534.9 1426.1,534.7 1433.6,534.5 1441.1,534.4 1448.6,534.3 1456.1,534.1 1463.6,534.0 1471.2,534.0 1478.7,533.9 1486.2,533.8 1493.7,533.8 1497.5,533.7 1505.0,533.7 1512.6,533.6 1520.1,533.7 1527.6,533.7 1535.1,533.7 1542.6,533.8 1550.2,533.9 1557.7,534.0 1565.2,534.1 1572.7,534.2 1580.2,534.4 1587.7,534.6 1595.2,534.8 1602.7,535.0 1610.3,535.3 1617.8,535.5 1625.3,535.8 1632.8,536.1 1640.3,536.4 1647.8,536.7 1655.3,537.0 1662.8,537.3 1670.3,537.6 1677.9,537.9 1685.4,538.3 1692.9,538.6 1700.4,539.0 1707.9,539.3 1715.4,539.7 1722.9,540.0 1730.4,540.3 1737.9,540.7 1745.5,541.0 1753.0,541.4 1760.5,541.7 1768.0,542.0 1775.5,542.4 1783.0,542.7 1790.5,543.0 1798.0,543.4 1805.5,543.7 1813.0,544.0 1820.6,544.4 1828.1,544.8 1835.6,545.1 1843.1,545.5 1850.6,545.9 1858.1,546.3 1865.6,546.7 1873.1,547.1 1880.6,547.5 1888.1,548.0 1895.6,548.4 1903.1,548.9 1910.6,549.4 1918.1,549.9 1925.6,550.5 1933.1,551.0 1940.6,551.6 1948.1,552.2 1955.6,552.8 1963.1,553.4 1970.6,554.1 1978.1,554.8 1985.6,555.5 1993.0,556.2 2000.5,556.9 2008.0,557.7 2015.5,558.4 2023.0,559.2 2030.4,560.0 2037.9,560.8 2045.4,561.7 2052.8,562.6 2060.3,563.4 2067.8,564.3 2075.2,565.2 2082.7,566.2 2090.2,567.1 2097.6,568.1 2105.1,569.1 2112.5,570.1 2119.9,571.1 2127.4,572.1 2134.8,573.1 2142.3,574.2 2149.7,575.3 2157.1,576.4 2164.6,577.5 2172.0,578.6 2179.4,579.7 2186.9,580.8 2194.3,581.9 2201.7,583.1 2209.2,584.3 2216.6,585.4 2224.0,586.6 2231.4,587.8 2238.9,589.0 2246.3,590.2 2253.7,591.4 2261.1,592.6 2268.6,593.9 2276.0,595.1 2283.4,596.4 2290.8,597.6 2298.2,598.9 2305.7,600.3 2313.1,601.6 2320.5,602.9 2327.9,604.3 2335.2,605.7 2342.6,607.2 2350.0,608.7 2357.4,610.2 2364.7,611.7 2372.1,613.3 2379.4,614.9 2386.7,616.5 2394.1,618.2 2401.4,619.9 2408.7,621.7 2415.9,623.5 2423.2,625.4 2430.5,627.3 2437.7,629.2 2444.9,631.2 2452.2,633.2 2459.4,635.3 2466.6,637.4 2473.8,639.5 2481.0,641.7 2488.2,643.9 2495.3,646.1 2502.5,648.3 2509.7,650.6 2516.8,652.9 2524.0,655.2 2531.1,657.5 2538.3,659.9 2545.4,662.3 2552.6,664.6 2559.7,667.0 2566.9,669.4 2574.0,671.9 2581.2,674.3 2588.3,676.7 2595.5,679.2 2602.6,681.7 2609.7,684.2 2616.8,686.8 2623.8,689.5 2630.8,692.3 2637.8,695.2 2648.1,699.6 2654.9,702.8 2661.7,706.1 2668.3,709.7 2674.9,713.4 2681.4,717.3 2687.8,721.4 2694.0,725.7 2700.1,730.3 2706.1,735.0 2711.9,740.1 2717.5,745.3 2722.9,750.7 2728.1,756.3 2733.1,762.1 2737.9,768.1 2742.5,774.2 2746.9,780.5 2753.9,789.4 2757.7,796.1 2761.2,802.9 2764.6,809.8 2767.8,816.7 2770.7,823.8 2773.4,830.9 2776.0,838.0 2778.3,845.2 2780.4,852.4 2782.3,859.7 2784.0,867.1 2785.5,874.4 2786.9,881.9 2788.1,889.3 2789.2,896.7 2790.2,904.2 2791.0,911.7 2791.8,919.1 2792.4,926.6 2793.0,934.1 2793.5,941.6 2793.9,949.1 2794.3,956.6 2794.6,964.2 2794.9,971.7 2795.2,979.2 2795.5,986.7 2794.0,986.7 2793.7,979.3 2793.4,971.8 2793.1,964.4 2792.8,956.9 2792.4,949.5 2792.0,942.1 2791.5,934.7 2790.9,927.2 2790.2,919.8 2789.4,912.4 2788.5,905.0 2787.4,897.6 2786.2,890.2 2784.8,882.9 2783.3,875.6 2781.5,868.4 2779.5,861.2 2777.2,854.1 2774.6,847.1 2771.8,840.2 2768.6,833.4 2765.2,826.7 2761.5,820.3 2757.5,813.9 2753.2,807.8 2748.7,801.9 2743.9,796.3 2741.0,792.5 2735.8,787.2 2730.4,782.1 2724.8,777.3 2719.0,772.7 2713.0,768.2 2706.9,763.9 2700.6,759.9 2694.2,755.9 2687.8,752.1 2681.2,748.4 2674.6,744.9 2668.0,741.5 2661.3,738.1 2654.6,734.9 2647.8,731.8 2641.0,728.8 2634.2,725.8 2629.8,724.0 2622.9,721.2 2616.0,718.4 2609.0,715.8 2602.1,713.2 2595.1,710.6 2588.1,708.1 2581.1,705.6 2574.0,703.1 2567.0,700.7 2560.0,698.3 2552.9,695.9 2545.8,693.5 2538.8,691.2 2531.7,688.9 2524.6,686.6 2517.5,684.3 2510.4,682.1 2503.3,679.9 2496.1,677.7 2489.0,675.6 2481.9,673.5 2474.7,671.4 2467.5,669.4 2460.4,667.4 2453.2,665.4 2446.0,663.5 2438.8,661.6 2431.6,659.8 2424.3,657.9 2417.1,656.2 2409.9,654.5 2402.6,652.8 2395.4,651.2 2388.1,649.6 2380.8,648.0 2373.5,646.5 2366.2,645.0 2358.9,643.6 2351.6,642.2 2344.3,640.8 2337.0,639.4 2329.7,638.1 2322.3,636.8 2315.0,635.5 2307.7,634.2 2300.3,633.0 2293.0,631.7 2285.6,630.5 2278.3,629.3 2270.9,628.1 2263.6,626.9 2256.2,625.7 2248.9,624.5 2241.5,623.3 2234.2,622.2 2226.8,621.0 2219.5,619.8 2212.1,618.6 2204.8,617.5 2197.4,616.3 2190.0,615.2 2182.7,614.0 2175.3,612.9 2168.0,611.8 2160.6,610.7 2153.2,609.6 2145.9,608.5 2138.5,607.4 2131.2,606.4 2123.8,605.3 2116.4,604.3 2109.0,603.3 2101.7,602.3 2094.3,601.4 2086.9,600.4 2079.5,599.5 2072.1,598.6 2064.7,597.7 2057.3,596.8 2049.9,596.0 2042.5,595.1 2035.1,594.3 2027.7,593.5 2020.3,592.7 2012.9,592.0 2005.5,591.2 1998.1,590.5 1990.7,589.7 1983.3,589.0 1975.9,588.3 1968.5,587.6 1961.1,586.9 1953.6,586.3 1946.2,585.6 1938.8,585.0 1931.4,584.3 1924.0,583.7 1916.6,583.1 1909.1,582.5 1901.7,581.9 1894.3,581.3 1886.9,580.7 1879.4,580.2 1872.0,579.6 1864.6,579.1 1857.2,578.5 1849.8,578.0 1842.3,577.5 1834.9,577.0 1827.5,576.4 1820.1,575.9 1812.6,575.4 1805.2,574.9 1797.8,574.5 1790.3,574.0 1782.9,573.5 1775.5,573.0 1768.1,572.6 1760.6,572.1 1753.2,571.7 1745.8,571.2 1738.3,570.7 1730.9,570.3 1723.5,569.9 1716.0,569.4 1708.6,569.0 1701.2,568.6 1693.7,568.1 1686.3,567.7 1678.9,567.3 1671.4,566.9 1664.0,566.5 1656.6,566.1 1649.1,565.8 1641.7,565.4 1634.3,565.1 1626.8,564.7 1619.4,564.4 1612.0,564.1 1604.5,563.8 1597.1,563.5 1589.6,563.3 1582.2,563.0 1574.8,562.8 1567.3,562.6 1559.9,562.4 1552.4,562.2 1545.0,562.1 1537.6,562.0 1530.1,561.9 1522.7,561.8 1515.2,561.7 1507.8,561.6 1500.3,561.6 1490.2,561.5 1482.8,561.5 1475.3,561.5 1467.9,561.5 1460.5,561.5 1453.0,561.5 1445.6,561.5 1438.1,561.5 1430.7,561.6 1423.2,561.7 1415.8,561.7 1408.3,561.8 1400.9,561.9 1393.5,562.0 1386.0,562.1 1378.6,562.2 1371.1,562.4 1363.7,562.5 1356.2,562.6 1348.8,562.8 1341.4,563.0 1333.9,563.2 1326.5,563.4 1319.0,563.6 1311.6,563.8 1304.2,564.0 1296.7,564.3 1289.3,564.5 1281.8,564.8 1274.4,565.1 1267.0,565.3 1259.5,565.6 1252.1,566.0 1244.7,566.3 1237.2,566.6 1229.8,567.0 1222.4,567.3 1214.9,567.7 1207.5,568.1 1200.1,568.5 1192.6,568.9 1185.2,569.4 1177.8,569.8 1170.3,570.3 1162.9,570.7 1155.5,571.2 1148.1,571.7 1140.6,572.2 1133.2,572.7 1125.8,573.2 1118.4,573.8 1110.9,574.3 1103.5,574.8 1096.1,575.4 1088.7,576.0 1081.3,576.5 1073.8,577.1 1066.4,577.7 1059.0,578.3 1051.6,578.9 1044.1,579.5 1036.7,580.1 1029.3,580.8 1021.9,581.4 1014.5,582.0 1007.1,582.7 999.6,583.3 992.2,584.0 984.8,584.7 977.4,585.4 970.0,586.1 962.6,586.9 955.2,587.6 947.8,588.4 940.4,589.2 933.0,590.0 925.6,590.9 918.2,591.7 910.8,592.6 903.4,593.5 896.0,594.5 888.6,595.4 881.3,596.5 873.9,597.5 866.5,598.6 859.2,599.7 851.8,600.8 844.5,602.0 837.1,603.2 829.8,604.4 822.5,605.7 815.1,606.9 807.8,608.2 800.5,609.5 793.1,610.9 785.8,612.2 778.5,613.5 771.2,614.9 763.8,616.2 756.5,617.6 749.2,618.9 741.9,620.3 734.6,621.7 727.3,623.1 719.9,624.5 712.6,625.9 705.3,627.4 698.0,628.8 690.7,630.3 683.4,631.8 676.2,633.3 668.9,634.9 661.6,636.4 654.3,638.0 647.0,639.6 639.8,641.2 632.5,642.8 625.3,644.4 618.0,646.1 610.7,647.8 603.5,649.4 596.2,651.1 589.0,652.8 581.7,654.5 574.5,656.3 567.3,658.0 560.0,659.7 552.8,661.5 545.6,663.3 538.3,665.1 531.1,667.0 523.9,668.9 516.7,670.7 509.5,672.7 502.3,674.6 495.2,676.6 488.0,678.6 480.9,680.7 473.7,682.8 466.6,684.9 456.9,687.9 449.8,690.1 442.7,692.3 435.6,694.6 428.6,696.9 421.5,699.2 414.4,701.6 407.4,704.0 400.3,706.4 393.3,708.9 386.3,711.3 379.2,713.8 372.2,716.3 365.2,718.8 358.2,721.3 351.2,723.9 344.2,726.4 337.2,729.0 330.2,731.6 323.3,734.2 316.3,736.9 309.4,739.6 302.4,742.3Z" fill="url(#darky)" filter="url(#b6)"/></g>
<g clip-path="url(#cBot)"><path d="M302.5,1231.6 309.5,1234.3 316.4,1237.0 323.4,1239.7 330.4,1242.3 337.4,1244.9 344.4,1247.5 351.4,1250.1 358.4,1252.6 365.4,1255.2 372.4,1257.7 379.4,1260.2 386.5,1262.7 393.5,1265.1 400.5,1267.6 407.6,1270.0 414.6,1272.4 421.7,1274.8 428.8,1277.1 435.9,1279.4 443.0,1281.7 450.1,1284.0 457.2,1286.2 466.0,1288.9 473.1,1291.0 480.3,1293.1 487.5,1295.2 494.6,1297.3 501.8,1299.3 509.0,1301.2 516.2,1303.2 523.4,1305.1 530.6,1307.0 537.8,1308.8 545.0,1310.7 552.3,1312.5 559.5,1314.3 566.8,1316.1 574.0,1317.8 581.2,1319.6 588.5,1321.3 595.8,1323.0 603.0,1324.7 610.3,1326.4 617.5,1328.1 624.8,1329.8 632.1,1331.5 639.3,1333.1 646.6,1334.7 653.9,1336.3 661.2,1337.9 668.4,1339.5 675.7,1341.1 683.0,1342.6 690.3,1344.1 697.6,1345.6 704.9,1347.0 712.3,1348.5 719.6,1349.9 726.9,1351.3 734.2,1352.7 741.5,1354.1 748.9,1355.5 756.2,1356.8 763.5,1358.2 770.9,1359.5 778.2,1360.9 785.5,1362.2 792.9,1363.6 800.2,1364.9 807.5,1366.2 814.9,1367.5 822.2,1368.8 829.6,1370.1 836.9,1371.3 844.3,1372.6 851.6,1373.8 859.0,1375.0 866.3,1376.1 873.7,1377.2 881.1,1378.3 888.5,1379.3 895.8,1380.3 903.2,1381.3 910.6,1382.3 918.0,1383.2 925.4,1384.1 932.8,1385.0 940.2,1385.8 947.6,1386.7 955.0,1387.5 962.4,1388.3 969.9,1389.0 977.3,1389.8 984.7,1390.5 992.1,1391.3 999.5,1392.0 1007.0,1392.7 1014.4,1393.4 1021.8,1394.1 1029.2,1394.7 1036.7,1395.4 1044.1,1396.1 1051.5,1396.7 1059.0,1397.3 1066.4,1398.0 1073.8,1398.6 1081.2,1399.2 1088.7,1399.8 1096.1,1400.4 1103.5,1401.0 1111.0,1401.6 1118.4,1402.2 1125.8,1402.7 1133.3,1403.3 1140.7,1403.8 1148.1,1404.4 1155.6,1404.9 1163.0,1405.4 1170.4,1405.9 1177.9,1406.4 1185.3,1406.9 1192.7,1407.3 1200.2,1407.8 1207.6,1408.2 1215.1,1408.6 1222.5,1409.1 1229.9,1409.5 1237.4,1409.8 1244.8,1410.2 1252.3,1410.6 1259.7,1410.9 1267.2,1411.3 1274.6,1411.6 1282.1,1411.9 1289.5,1412.2 1296.9,1412.5 1304.4,1412.8 1311.8,1413.0 1319.3,1413.3 1326.7,1413.5 1334.2,1413.7 1341.6,1413.9 1349.1,1414.1 1356.6,1414.3 1364.0,1414.5 1371.5,1414.7 1378.9,1414.8 1386.4,1415.0 1393.8,1415.1 1401.3,1415.2 1408.7,1415.3 1416.2,1415.4 1423.6,1415.5 1431.1,1415.6 1438.5,1415.6 1446.0,1415.7 1453.4,1415.7 1460.9,1415.8 1468.4,1415.8 1475.8,1415.8 1483.3,1415.8 1490.7,1415.8 1499.9,1415.7 1507.4,1415.7 1514.9,1415.6 1522.3,1415.6 1529.8,1415.5 1537.2,1415.4 1544.7,1415.3 1552.1,1415.1 1559.6,1415.0 1567.0,1414.8 1574.5,1414.6 1581.9,1414.4 1589.4,1414.1 1596.8,1413.9 1604.3,1413.6 1611.7,1413.3 1619.2,1413.0 1626.6,1412.7 1634.1,1412.4 1641.5,1412.0 1649.0,1411.7 1656.4,1411.3 1663.8,1411.0 1671.3,1410.6 1678.7,1410.2 1686.2,1409.8 1693.6,1409.4 1701.1,1409.0 1708.5,1408.6 1716.0,1408.1 1723.4,1407.7 1730.8,1407.3 1738.3,1406.8 1745.7,1406.4 1753.2,1406.0 1760.6,1405.5 1768.0,1405.1 1775.5,1404.6 1782.9,1404.2 1790.4,1403.7 1797.8,1403.3 1805.2,1402.8 1812.7,1402.3 1820.1,1401.9 1827.6,1401.4 1835.0,1400.9 1842.4,1400.4 1849.9,1399.9 1857.3,1399.4 1864.7,1398.9 1872.2,1398.3 1879.6,1397.8 1887.0,1397.2 1894.5,1396.7 1901.9,1396.1 1909.3,1395.5 1916.8,1394.9 1924.2,1394.3 1931.6,1393.7 1939.1,1393.1 1946.5,1392.4 1953.9,1391.8 1961.3,1391.1 1968.8,1390.5 1976.2,1389.8 1983.6,1389.1 1991.0,1388.4 1998.5,1387.6 2005.9,1386.9 2013.3,1386.1 2020.7,1385.3 2028.1,1384.6 2035.5,1383.7 2042.9,1382.9 2050.3,1382.1 2057.8,1381.2 2065.2,1380.4 2072.6,1379.5 2080.0,1378.6 2087.3,1377.6 2094.7,1376.7 2102.1,1375.7 2109.5,1374.7 2116.9,1373.7 2124.3,1372.7 2131.7,1371.7 2139.0,1370.6 2146.4,1369.5 2153.8,1368.5 2161.2,1367.4 2168.5,1366.3 2175.9,1365.1 2183.3,1364.0 2190.6,1362.9 2198.0,1361.7 2205.4,1360.6 2212.7,1359.4 2220.1,1358.2 2227.5,1357.1 2234.8,1355.9 2242.2,1354.7 2249.6,1353.5 2256.9,1352.3 2264.3,1351.1 2271.6,1349.9 2279.0,1348.7 2286.4,1347.5 2293.7,1346.3 2301.1,1345.0 2308.4,1343.7 2315.8,1342.5 2323.1,1341.2 2330.5,1339.8 2337.8,1338.5 2345.1,1337.1 2352.4,1335.7 2359.7,1334.3 2367.1,1332.8 2374.4,1331.3 2381.6,1329.8 2388.9,1328.2 2396.2,1326.6 2403.5,1324.9 2410.7,1323.2 2418.0,1321.5 2425.2,1319.7 2432.4,1317.9 2439.6,1316.0 2446.8,1314.1 2454.0,1312.2 2461.2,1310.2 2468.4,1308.2 2475.6,1306.1 2482.7,1304.1 2489.9,1301.9 2497.0,1299.8 2504.2,1297.6 2511.3,1295.4 2518.4,1293.1 2525.5,1290.9 2532.6,1288.6 2539.7,1286.3 2546.8,1283.9 2553.9,1281.5 2560.9,1279.1 2568.0,1276.7 2575.0,1274.3 2582.1,1271.8 2589.1,1269.4 2596.1,1266.8 2603.1,1264.3 2610.1,1261.7 2617.1,1259.0 2624.0,1256.3 2630.9,1253.4 2636.1,1251.2 2643.0,1248.2 2649.8,1245.2 2656.5,1242.0 2663.2,1238.7 2669.9,1235.3 2676.5,1231.8 2683.0,1228.1 2689.5,1224.3 2695.9,1220.4 2702.2,1216.3 2708.3,1212.1 2714.4,1207.6 2720.2,1203.0 2725.9,1198.2 2731.4,1193.2 2736.7,1188.0 2741.8,1182.6 2745.3,1178.1 2740.9,1175.0 2739.2,1177.3 2733.7,1182.3 2728.1,1187.0 2722.2,1191.5 2716.2,1195.8 2710.0,1199.9 2703.7,1203.8 2697.2,1207.6 2690.7,1211.2 2684.0,1214.7 2677.4,1218.1 2670.7,1221.4 2664.0,1224.6 2657.2,1227.8 2650.4,1230.8 2643.6,1233.8 2636.8,1236.8 2630.0,1239.6 2627.4,1240.7 2620.5,1243.5 2613.6,1246.2 2606.7,1248.9 2599.8,1251.5 2592.8,1254.1 2585.8,1256.6 2578.9,1259.1 2571.9,1261.5 2564.9,1264.0 2557.9,1266.4 2550.8,1268.8 2543.8,1271.2 2536.7,1273.5 2529.7,1275.8 2522.6,1278.1 2515.5,1280.3 2508.4,1282.5 2501.3,1284.7 2494.2,1286.8 2487.1,1288.9 2479.9,1291.0 2472.8,1293.0 2465.6,1295.0 2458.5,1297.0 2451.3,1298.9 2444.1,1300.8 2436.9,1302.6 2429.7,1304.4 2422.5,1306.2 2415.3,1307.9 2408.0,1309.6 2400.8,1311.2 2393.6,1312.8 2386.3,1314.3 2379.0,1315.8 2371.8,1317.3 2364.5,1318.8 2357.2,1320.2 2349.9,1321.6 2342.6,1322.9 2335.3,1324.2 2328.0,1325.5 2320.7,1326.8 2313.4,1328.1 2306.0,1329.3 2298.7,1330.6 2291.4,1331.8 2284.1,1333.0 2276.7,1334.2 2269.4,1335.4 2262.1,1336.5 2254.7,1337.7 2247.4,1338.9 2240.1,1340.1 2232.8,1341.2 2225.4,1342.4 2218.1,1343.6 2210.8,1344.7 2203.4,1345.9 2196.1,1347.0 2188.8,1348.2 2181.4,1349.3 2174.1,1350.5 2166.7,1351.6 2159.4,1352.7 2152.1,1353.8 2144.7,1354.9 2137.4,1355.9 2130.0,1357.0 2122.7,1358.0 2115.3,1359.0 2108.0,1360.0 2100.6,1361.0 2093.3,1362.0 2085.9,1362.9 2078.5,1363.8 2071.2,1364.7 2063.8,1365.6 2056.4,1366.5 2049.1,1367.3 2041.7,1368.1 2034.3,1369.0 2026.9,1369.7 2019.5,1370.5 2012.2,1371.3 2004.8,1372.1 1997.4,1372.8 1990.0,1373.5 1982.6,1374.2 1975.2,1374.9 1967.8,1375.6 1960.4,1376.3 1953.1,1377.0 1945.7,1377.7 1938.3,1378.3 1930.9,1379.0 1923.5,1379.6 1916.1,1380.3 1908.7,1380.9 1901.3,1381.5 1893.9,1382.1 1886.5,1382.8 1879.1,1383.4 1871.7,1384.0 1864.3,1384.5 1856.9,1385.1 1849.5,1385.7 1842.1,1386.3 1834.7,1386.8 1827.3,1387.4 1819.9,1387.9 1812.5,1388.5 1805.1,1389.0 1797.7,1389.5 1790.3,1390.1 1782.9,1390.6 1775.5,1391.1 1768.1,1391.6 1760.7,1392.1 1753.3,1392.6 1745.9,1393.1 1738.5,1393.6 1731.1,1394.0 1723.6,1394.5 1716.2,1395.0 1708.8,1395.4 1701.4,1395.9 1694.0,1396.4 1686.6,1396.8 1679.2,1397.2 1671.8,1397.6 1664.4,1398.0 1657.0,1398.4 1649.5,1398.8 1642.1,1399.2 1634.7,1399.6 1627.3,1399.9 1619.9,1400.3 1612.5,1400.6 1605.1,1400.9 1597.6,1401.2 1590.2,1401.5 1582.8,1401.7 1575.4,1402.0 1568.0,1402.2 1560.5,1402.4 1553.1,1402.6 1545.7,1402.7 1538.3,1402.9 1530.9,1403.0 1523.4,1403.1 1516.0,1403.2 1508.6,1403.3 1501.2,1403.4 1489.2,1403.5 1481.8,1403.6 1474.3,1403.6 1466.9,1403.6 1459.5,1403.7 1452.1,1403.7 1444.6,1403.7 1437.2,1403.6 1429.8,1403.6 1422.4,1403.6 1415.0,1403.6 1407.5,1403.5 1400.1,1403.5 1392.7,1403.4 1385.3,1403.3 1377.8,1403.3 1370.4,1403.2 1363.0,1403.1 1355.6,1403.0 1348.2,1402.9 1340.7,1402.8 1333.3,1402.7 1325.9,1402.5 1318.5,1402.4 1311.1,1402.2 1303.6,1402.1 1296.2,1401.9 1288.8,1401.7 1281.4,1401.5 1274.0,1401.3 1266.5,1401.1 1259.1,1400.9 1251.7,1400.6 1244.3,1400.4 1236.9,1400.1 1229.5,1399.8 1222.0,1399.6 1214.6,1399.3 1207.2,1398.9 1199.8,1398.6 1192.4,1398.3 1185.0,1397.9 1177.6,1397.5 1170.2,1397.1 1162.8,1396.8 1155.3,1396.4 1147.9,1395.9 1140.5,1395.5 1133.1,1395.1 1125.7,1394.6 1118.3,1394.2 1110.9,1393.7 1103.5,1393.2 1096.1,1392.8 1088.7,1392.3 1081.3,1391.8 1073.9,1391.3 1066.5,1390.8 1059.1,1390.2 1051.7,1389.7 1044.3,1389.2 1036.8,1388.6 1029.4,1388.1 1022.0,1387.6 1014.6,1387.0 1007.2,1386.4 999.8,1385.9 992.4,1385.3 985.0,1384.7 977.6,1384.1 970.2,1383.4 962.8,1382.8 955.4,1382.1 948.0,1381.4 940.7,1380.7 933.3,1380.0 925.9,1379.2 918.5,1378.4 911.1,1377.6 903.8,1376.8 896.4,1375.9 889.0,1375.0 881.7,1374.1 874.3,1373.1 867.0,1372.1 859.6,1371.1 852.3,1370.0 844.9,1368.9 837.6,1367.8 830.3,1366.6 823.0,1365.4 815.7,1364.2 808.3,1362.9 801.0,1361.6 793.7,1360.3 786.4,1359.0 779.1,1357.7 771.8,1356.4 764.5,1355.0 757.2,1353.7 749.9,1352.3 742.6,1350.9 735.3,1349.5 728.0,1348.1 720.7,1346.7 713.4,1345.3 706.2,1343.8 698.9,1342.4 691.6,1340.9 684.3,1339.4 677.1,1337.9 669.8,1336.4 662.5,1334.9 655.3,1333.4 648.0,1331.8 640.8,1330.3 633.5,1328.7 626.2,1327.1 619.0,1325.5 611.8,1323.9 604.5,1322.3 597.3,1320.7 590.0,1319.0 582.8,1317.4 575.6,1315.7 568.3,1314.0 561.1,1312.3 553.9,1310.6 546.7,1308.8 539.5,1307.0 532.3,1305.2 525.1,1303.4 517.9,1301.5 510.7,1299.6 503.5,1297.7 496.4,1295.8 489.2,1293.8 482.1,1291.7 475.0,1289.7 467.9,1287.6 456.4,1284.1 449.3,1281.9 442.2,1279.7 435.1,1277.4 428.1,1275.1 421.0,1272.8 414.0,1270.5 406.9,1268.1 399.9,1265.7 392.9,1263.3 385.9,1260.9 378.9,1258.4 371.9,1255.9 364.9,1253.4 357.9,1250.9 350.9,1248.4 343.9,1245.9 336.9,1243.3 330.0,1240.7 323.0,1238.1 316.1,1235.5 309.1,1232.8 302.2,1230.1Z" fill="#ff7452" filter="url(#b3)"/></g>
<rect x="2743" y="780" width="60" height="420" fill="#a02208" fill-opacity="0.22"/>
<path d="M80.0,986.7 80.0,926.7 80.5,884.7 83.2,877.8 86.7,871.4 91.1,865.4 96.1,859.8 101.6,854.7 107.3,849.8 113.2,845.2 119.2,840.8 125.3,836.6 131.4,832.6 137.7,828.7 143.9,824.9 150.2,821.0 156.6,817.2 162.9,813.5 169.3,809.7 175.7,806.0 182.1,802.3 188.5,798.6 194.9,795.0 201.4,791.4 207.9,787.9 214.4,784.4 221.0,780.9 227.6,777.6 234.2,774.3 240.8,771.0 247.5,767.9 254.2,764.8 261.0,761.7 267.7,758.8 274.5,755.9 281.3,753.0 288.2,750.2 295.0,747.4 301.9,744.7 308.8,742.1 315.7,739.4 322.6,736.8 329.6,734.2 336.5,731.7 343.5,729.2 350.4,726.7 357.4,724.2 364.4,721.7 371.3,719.2 378.3,716.8 385.3,714.4 392.3,711.9 399.3,709.6 406.3,707.2 413.3,704.8 420.3,702.5 427.3,700.2 434.4,698.0 441.4,695.7 448.5,693.5 455.5,691.4 462.6,689.2 469.7,687.1 476.8,685.1 483.9,683.1 491.0,681.1 498.1,679.1 505.3,677.2 512.4,675.3 519.6,673.5 526.8,671.7 533.9,669.9 541.1,668.2 548.3,666.4 555.5,664.7 562.7,663.1 569.9,661.4 577.1,659.8 584.3,658.2 591.6,656.6 598.8,655.0 606.0,653.5 613.2,652.0 620.5,650.4 627.7,648.9 634.9,647.4 642.2,645.9 649.4,644.5 656.7,643.0 663.9,641.5 671.1,640.1 678.4,638.6 685.6,637.2 692.9,635.7 700.1,634.2 707.4,632.8 714.6,631.3 721.9,629.9 729.1,628.5 736.4,627.1 743.7,625.7 750.9,624.3 758.2,622.9 765.5,621.5 772.7,620.2 780.0,618.8 787.3,617.5 794.6,616.3 801.8,615.0 809.1,613.8 816.4,612.6 823.7,611.5 831.0,610.3 838.3,609.2 845.6,608.2 852.9,607.2 860.3,606.2 867.6,605.2 874.9,604.3 882.3,603.5 889.6,602.7 896.9,601.9 904.3,601.1 911.7,600.4 919.0,599.7 926.4,599.1 933.7,598.4 941.1,597.8 948.5,597.2 955.8,596.7 963.2,596.1 970.6,595.6 978.0,595.1 985.3,594.6 992.7,594.1 1000.1,593.7 1007.5,593.2 1014.9,592.8 1022.3,592.3 1029.6,591.9 1037.0,591.5 1044.4,591.1 1051.8,590.7 1059.2,590.3 1066.6,589.9 1073.9,589.5 1081.3,589.1 1088.7,588.7 1096.1,588.3 1103.5,587.9 1110.8,587.6 1118.2,587.2 1125.6,586.9 1133.0,586.5 1140.4,586.2 1147.8,585.9 1155.1,585.6 1162.5,585.3 1169.9,585.0 1177.3,584.7 1184.7,584.5 1192.1,584.2 1199.4,584.0 1206.8,583.8 1214.2,583.5 1221.6,583.3 1229.0,583.2 1236.4,583.0 1243.8,582.8 1251.1,582.7 1258.5,582.6 1265.9,582.4 1273.3,582.3 1280.7,582.2 1288.1,582.1 1295.5,582.1 1302.9,582.0 1310.3,581.9 1317.6,581.9 1325.0,581.8 1332.4,581.8 1339.8,581.8 1347.2,581.7 1354.6,581.7 1362.0,581.7 1369.4,581.7 1376.8,581.7 1384.2,581.7 1391.6,581.7 1399.0,581.7 1406.3,581.7 1413.7,581.7 1421.1,581.7 1428.5,581.7 1435.9,581.8 1443.3,581.8 1450.7,581.8 1458.1,581.9 1465.5,581.9 1472.9,582.0 1480.3,582.0 1487.6,582.1 1495.0,582.2 1502.4,582.3 1509.8,582.4 1517.2,582.5 1524.6,582.7 1532.0,582.8 1539.4,583.0 1546.8,583.2 1554.1,583.4 1561.5,583.6 1568.9,583.8 1576.3,584.1 1583.7,584.3 1591.1,584.6 1598.5,584.9 1605.8,585.2 1613.2,585.6 1620.6,585.9 1628.0,586.3 1635.4,586.6 1642.7,587.0 1650.1,587.4 1657.5,587.8 1664.9,588.3 1672.3,588.7 1679.6,589.2 1687.0,589.6 1694.4,590.1 1701.8,590.6 1709.1,591.1 1716.5,591.6 1723.9,592.1 1731.3,592.6 1738.6,593.1 1746.0,593.7 1753.4,594.2 1760.7,594.7 1768.1,595.3 1775.5,595.9 1782.8,596.4 1790.2,597.0 1797.6,597.6 1804.9,598.2 1812.3,598.8 1819.7,599.4 1827.0,600.0 1834.4,600.6 1841.8,601.3 1849.1,601.9 1856.5,602.5 1863.9,603.2 1871.2,603.8 1878.6,604.5 1885.9,605.1 1893.3,605.8 1900.7,606.4 1908.0,607.1 1915.4,607.8 1922.7,608.5 1930.1,609.1 1937.5,609.8 1944.8,610.5 1952.2,611.2 1959.5,611.9 1966.9,612.6 1974.3,613.3 1981.6,614.0 1989.0,614.7 1996.3,615.4 2003.7,616.2 2011.0,616.9 2018.4,617.7 2025.7,618.5 2033.1,619.2 2040.4,620.0 2047.8,620.9 2055.1,621.7 2062.5,622.5 2069.8,623.4 2077.1,624.3 2084.5,625.2 2091.8,626.1 2099.1,627.1 2106.5,628.1 2113.8,629.1 2121.1,630.1 2128.4,631.1 2135.7,632.1 2143.0,633.2 2150.3,634.3 2157.7,635.4 2165.0,636.5 2172.3,637.6 2179.6,638.8 2186.9,639.9 2194.2,641.0 2201.5,642.2 2208.8,643.3 2216.1,644.5 2223.4,645.7 2230.7,646.8 2238.0,648.0 2245.3,649.1 2252.6,650.3 2259.9,651.5 2267.2,652.6 2274.5,653.8 2281.8,654.9 2289.1,656.1 2296.4,657.3 2303.7,658.5 2311.0,659.7 2318.2,660.9 2325.5,662.2 2332.8,663.4 2340.1,664.7 2347.4,666.0 2354.6,667.3 2361.9,668.7 2369.2,670.1 2376.4,671.5 2383.7,672.9 2390.9,674.4 2398.1,676.0 2405.4,677.5 2412.6,679.1 2419.8,680.8 2427.0,682.5 2434.2,684.2 2441.4,686.0 2448.6,687.8 2455.7,689.7 2462.9,691.6 2470.0,693.5 2477.2,695.5 2484.3,697.5 2491.4,699.6 2498.5,701.7 2505.6,703.8 2512.7,706.0 2519.7,708.2 2526.8,710.4 2533.8,712.7 2540.8,715.0 2547.8,717.4 2554.8,719.7 2561.8,722.1 2568.7,724.6 2575.7,727.1 2582.6,729.6 2589.5,732.1 2596.4,734.7 2603.3,737.3 2610.1,740.0 2617.0,742.6 2623.8,745.4 2630.7,748.1 2637.5,750.9 2644.4,753.7 2651.2,756.6 2658.0,759.5 2664.9,762.4 2671.7,765.4 2678.6,768.4 2685.4,771.4 2692.2,774.6 2699.0,777.8 2705.6,781.3 2712.2,784.8 2718.5,788.6 2724.8,792.6 2730.8,796.9 2736.5,801.4 2742.0,806.3 2747.3,811.5 2752.2,817.0 2756.8,822.9 2761.1,829.0 2765.0,835.3 2768.6,841.8 2771.9,848.5 2774.8,855.3 2777.4,862.3 2779.6,869.3 2781.6,876.5 2783.3,883.7 2784.8,890.9 2786.1,898.3 2787.2,905.6 2788.2,912.9 2789.0,920.3 2789.7,927.7 2790.3,935.0 2790.9,942.4 2791.3,949.8 2791.7,957.2 2792.0,964.5 2792.3,971.9 2792.6,979.3 2792.8,986.7 2792.6,994.1 2792.3,1001.5 2792.0,1008.9 2791.7,1016.2 2791.3,1023.6 2790.9,1031.0 2790.3,1038.4 2789.7,1045.7 2789.0,1053.1 2788.2,1060.5 2787.2,1067.8 2786.1,1075.1 2784.8,1082.5 2783.3,1089.7 2781.6,1096.9 2779.6,1104.1 2777.4,1111.1 2774.8,1118.1 2771.9,1124.9 2768.6,1131.6 2765.0,1138.1 2761.1,1144.4 2756.8,1150.5 2752.2,1156.4 2747.3,1161.9 2742.0,1167.1 2736.5,1172.0 2730.8,1176.5 2724.8,1180.8 2718.5,1184.8 2712.2,1188.6 2705.6,1192.1 2699.0,1195.6 2692.2,1198.8 2685.4,1202.0 2678.6,1205.0 2671.7,1208.0 2664.9,1211.0 2658.0,1213.9 2651.2,1216.8 2644.4,1219.7 2637.5,1222.5 2630.7,1225.3 2623.8,1228.0 2617.0,1230.8 2610.1,1233.4 2603.3,1236.1 2596.4,1238.7 2589.5,1241.3 2582.6,1243.8 2575.7,1246.3 2568.7,1248.8 2561.8,1251.3 2554.8,1253.7 2547.8,1256.0 2540.8,1258.4 2533.8,1260.7 2526.8,1263.0 2519.7,1265.2 2512.7,1267.4 2505.6,1269.6 2498.5,1271.7 2491.4,1273.8 2484.3,1275.9 2477.2,1277.9 2470.0,1279.9 2462.9,1281.8 2455.7,1283.7 2448.6,1285.6 2441.4,1287.4 2434.2,1289.2 2427.0,1290.9 2419.8,1292.6 2412.6,1294.3 2405.4,1295.9 2398.1,1297.4 2390.9,1299.0 2383.7,1300.5 2376.4,1301.9 2369.2,1303.3 2361.9,1304.7 2354.6,1306.1 2347.4,1307.4 2340.1,1308.7 2332.8,1310.0 2325.5,1311.2 2318.2,1312.5 2311.0,1313.7 2303.7,1314.9 2296.4,1316.1 2289.1,1317.3 2281.8,1318.5 2274.5,1319.6 2267.2,1320.8 2259.9,1321.9 2252.6,1323.1 2245.3,1324.3 2238.0,1325.4 2230.7,1326.6 2223.4,1327.7 2216.1,1328.9 2208.8,1330.1 2201.5,1331.2 2194.2,1332.4 2186.9,1333.5 2179.6,1334.6 2172.3,1335.8 2165.0,1336.9 2157.7,1338.0 2150.3,1339.1 2143.0,1340.2 2135.7,1341.3 2128.4,1342.3 2121.1,1343.3 2113.8,1344.3 2106.5,1345.3 2099.1,1346.3 2091.8,1347.3 2084.5,1348.2 2077.1,1349.1 2069.8,1350.0 2062.5,1350.9 2055.1,1351.7 2047.8,1352.5 2040.4,1353.4 2033.1,1354.2 2025.7,1354.9 2018.4,1355.7 2011.0,1356.5 2003.7,1357.2 1996.3,1358.0 1989.0,1358.7 1981.6,1359.4 1974.3,1360.1 1966.9,1360.8 1959.5,1361.5 1952.2,1362.2 1944.8,1362.9 1937.5,1363.6 1930.1,1364.3 1922.7,1364.9 1915.4,1365.6 1908.0,1366.3 1900.7,1367.0 1893.3,1367.6 1885.9,1368.3 1878.6,1368.9 1871.2,1369.6 1863.9,1370.2 1856.5,1370.9 1849.1,1371.5 1841.8,1372.1 1834.4,1372.8 1827.0,1373.4 1819.7,1374.0 1812.3,1374.6 1804.9,1375.2 1797.6,1375.8 1790.2,1376.4 1782.8,1377.0 1775.5,1377.5 1768.1,1378.1 1760.7,1378.7 1753.4,1379.2 1746.0,1379.7 1738.6,1380.3 1731.3,1380.8 1723.9,1381.3 1716.5,1381.8 1709.1,1382.3 1701.8,1382.8 1694.4,1383.3 1687.0,1383.8 1679.6,1384.2 1672.3,1384.7 1664.9,1385.1 1657.5,1385.6 1650.1,1386.0 1642.7,1386.4 1635.4,1386.8 1628.0,1387.1 1620.6,1387.5 1613.2,1387.8 1605.8,1388.2 1598.5,1388.5 1591.1,1388.8 1583.7,1389.1 1576.3,1389.3 1568.9,1389.6 1561.5,1389.8 1554.1,1390.0 1546.8,1390.2 1539.4,1390.4 1532.0,1390.6 1524.6,1390.7 1517.2,1390.9 1509.8,1391.0 1502.4,1391.1 1495.0,1391.2 1487.6,1391.3 1480.3,1391.4 1472.9,1391.4 1465.5,1391.5 1458.1,1391.5 1450.7,1391.6 1443.3,1391.6 1435.9,1391.6 1428.5,1391.7 1421.1,1391.7 1413.7,1391.7 1406.3,1391.7 1399.0,1391.7 1391.6,1391.7 1384.2,1391.7 1376.8,1391.7 1369.4,1391.7 1362.0,1391.7 1354.6,1391.7 1347.2,1391.7 1339.8,1391.6 1332.4,1391.6 1325.0,1391.6 1317.6,1391.5 1310.3,1391.5 1302.9,1391.4 1295.5,1391.3 1288.1,1391.3 1280.7,1391.2 1273.3,1391.1 1265.9,1391.0 1258.5,1390.8 1251.1,1390.7 1243.8,1390.6 1236.4,1390.4 1229.0,1390.2 1221.6,1390.1 1214.2,1389.9 1206.8,1389.6 1199.4,1389.4 1192.1,1389.2 1184.7,1388.9 1177.3,1388.7 1169.9,1388.4 1162.5,1388.1 1155.1,1387.8 1147.8,1387.5 1140.4,1387.2 1133.0,1386.9 1125.6,1386.5 1118.2,1386.2 1110.8,1385.8 1103.5,1385.5 1096.1,1385.1 1088.7,1384.7 1081.3,1384.3 1073.9,1383.9 1066.6,1383.5 1059.2,1383.1 1051.8,1382.7 1044.4,1382.3 1037.0,1381.9 1029.6,1381.5 1022.3,1381.1 1014.9,1380.6 1007.5,1380.2 1000.1,1379.7 992.7,1379.3 985.3,1378.8 978.0,1378.3 970.6,1377.8 963.2,1377.3 955.8,1376.7 948.5,1376.2 941.1,1375.6 933.7,1375.0 926.4,1374.3 919.0,1373.7 911.7,1373.0 904.3,1372.3 896.9,1371.5 889.6,1370.7 882.3,1369.9 874.9,1369.1 867.6,1368.2 860.3,1367.2 852.9,1366.2 845.6,1365.2 838.3,1364.2 831.0,1363.1 823.7,1361.9 816.4,1360.8 809.1,1359.6 801.8,1358.4 794.6,1357.1 787.3,1355.9 780.0,1354.6 772.7,1353.2 765.5,1351.9 758.2,1350.5 750.9,1349.1 743.7,1347.7 736.4,1346.3 729.1,1344.9 721.9,1343.5 714.6,1342.1 707.4,1340.6 700.1,1339.2 692.9,1337.7 685.6,1336.2 678.4,1334.8 671.1,1333.3 663.9,1331.9 656.7,1330.4 649.4,1328.9 642.2,1327.5 634.9,1326.0 627.7,1324.5 620.5,1323.0 613.2,1321.4 606.0,1319.9 598.8,1318.4 591.6,1316.8 584.3,1315.2 577.1,1313.6 569.9,1312.0 562.7,1310.3 555.5,1308.7 548.3,1307.0 541.1,1305.2 533.9,1303.5 526.8,1301.7 519.6,1299.9 512.4,1298.1 505.3,1296.2 498.1,1294.3 491.0,1292.3 483.9,1290.3 476.8,1288.3 469.7,1286.3 462.6,1284.2 455.5,1282.0 448.5,1279.9 441.4,1277.7 434.4,1275.4 427.3,1273.2 420.3,1270.9 413.3,1268.6 406.3,1266.2 399.3,1263.8 392.3,1261.5 385.3,1259.0 378.3,1256.6 371.3,1254.2 364.4,1251.7 357.4,1249.2 350.4,1246.7 343.5,1244.2 336.5,1241.7 329.6,1239.2 322.6,1236.6 315.7,1234.0 308.8,1231.3 301.9,1228.7 295.0,1226.0 288.2,1223.2 281.3,1220.4 274.5,1217.5 267.7,1214.6 261.0,1211.7 254.2,1208.6 247.5,1205.5 240.8,1202.4 234.2,1199.1 227.6,1195.8 221.0,1192.5 214.4,1189.0 207.9,1185.5 201.4,1182.0 194.9,1178.4 188.5,1174.8 182.1,1171.1 175.7,1167.4 169.3,1163.7 162.9,1159.9 156.6,1156.2 150.2,1152.4 143.9,1148.5 137.7,1144.7 131.4,1140.8 125.3,1136.8 119.2,1132.6 113.2,1128.2 107.3,1123.6 101.6,1118.7 96.1,1113.6 91.1,1108.0 86.7,1102.0 83.2,1095.6 80.5,1088.7 80.0,1046.7Z" fill="none" stroke="url(#tlx)" stroke-width="1.9"/>
<g clip-path="url(#cBot)"><path d="M80.0,986.7 80.0,926.7 80.5,884.7 83.2,877.8 86.7,871.4 91.1,865.4 96.1,859.8 101.6,854.7 107.3,849.8 113.2,845.2 119.2,840.8 125.3,836.6 131.4,832.6 137.7,828.7 143.9,824.9 150.2,821.0 156.6,817.2 162.9,813.5 169.3,809.7 175.7,806.0 182.1,802.3 188.5,798.6 194.9,795.0 201.4,791.4 207.9,787.9 214.4,784.4 221.0,780.9 227.6,777.6 234.2,774.3 240.8,771.0 247.5,767.9 254.2,764.8 261.0,761.7 267.7,758.8 274.5,755.9 281.3,753.0 288.2,750.2 295.0,747.4 301.9,744.7 308.8,742.1 315.7,739.4 322.6,736.8 329.6,734.2 336.5,731.7 343.5,729.2 350.4,726.7 357.4,724.2 364.4,721.7 371.3,719.2 378.3,716.8 385.3,714.4 392.3,711.9 399.3,709.6 406.3,707.2 413.3,704.8 420.3,702.5 427.3,700.2 434.4,698.0 441.4,695.7 448.5,693.5 455.5,691.4 462.6,689.2 469.7,687.1 476.8,685.1 483.9,683.1 491.0,681.1 498.1,679.1 505.3,677.2 512.4,675.3 519.6,673.5 526.8,671.7 533.9,669.9 541.1,668.2 548.3,666.4 555.5,664.7 562.7,663.1 569.9,661.4 577.1,659.8 584.3,658.2 591.6,656.6 598.8,655.0 606.0,653.5 613.2,652.0 620.5,650.4 627.7,648.9 634.9,647.4 642.2,645.9 649.4,644.5 656.7,643.0 663.9,641.5 671.1,640.1 678.4,638.6 685.6,637.2 692.9,635.7 700.1,634.2 707.4,632.8 714.6,631.3 721.9,629.9 729.1,628.5 736.4,627.1 743.7,625.7 750.9,624.3 758.2,622.9 765.5,621.5 772.7,620.2 780.0,618.8 787.3,617.5 794.6,616.3 801.8,615.0 809.1,613.8 816.4,612.6 823.7,611.5 831.0,610.3 838.3,609.2 845.6,608.2 852.9,607.2 860.3,606.2 867.6,605.2 874.9,604.3 882.3,603.5 889.6,602.7 896.9,601.9 904.3,601.1 911.7,600.4 919.0,599.7 926.4,599.1 933.7,598.4 941.1,597.8 948.5,597.2 955.8,596.7 963.2,596.1 970.6,595.6 978.0,595.1 985.3,594.6 992.7,594.1 1000.1,593.7 1007.5,593.2 1014.9,592.8 1022.3,592.3 1029.6,591.9 1037.0,591.5 1044.4,591.1 1051.8,590.7 1059.2,590.3 1066.6,589.9 1073.9,589.5 1081.3,589.1 1088.7,588.7 1096.1,588.3 1103.5,587.9 1110.8,587.6 1118.2,587.2 1125.6,586.9 1133.0,586.5 1140.4,586.2 1147.8,585.9 1155.1,585.6 1162.5,585.3 1169.9,585.0 1177.3,584.7 1184.7,584.5 1192.1,584.2 1199.4,584.0 1206.8,583.8 1214.2,583.5 1221.6,583.3 1229.0,583.2 1236.4,583.0 1243.8,582.8 1251.1,582.7 1258.5,582.6 1265.9,582.4 1273.3,582.3 1280.7,582.2 1288.1,582.1 1295.5,582.1 1302.9,582.0 1310.3,581.9 1317.6,581.9 1325.0,581.8 1332.4,581.8 1339.8,581.8 1347.2,581.7 1354.6,581.7 1362.0,581.7 1369.4,581.7 1376.8,581.7 1384.2,581.7 1391.6,581.7 1399.0,581.7 1406.3,581.7 1413.7,581.7 1421.1,581.7 1428.5,581.7 1435.9,581.8 1443.3,581.8 1450.7,581.8 1458.1,581.9 1465.5,581.9 1472.9,582.0 1480.3,582.0 1487.6,582.1 1495.0,582.2 1502.4,582.3 1509.8,582.4 1517.2,582.5 1524.6,582.7 1532.0,582.8 1539.4,583.0 1546.8,583.2 1554.1,583.4 1561.5,583.6 1568.9,583.8 1576.3,584.1 1583.7,584.3 1591.1,584.6 1598.5,584.9 1605.8,585.2 1613.2,585.6 1620.6,585.9 1628.0,586.3 1635.4,586.6 1642.7,587.0 1650.1,587.4 1657.5,587.8 1664.9,588.3 1672.3,588.7 1679.6,589.2 1687.0,589.6 1694.4,590.1 1701.8,590.6 1709.1,591.1 1716.5,591.6 1723.9,592.1 1731.3,592.6 1738.6,593.1 1746.0,593.7 1753.4,594.2 1760.7,594.7 1768.1,595.3 1775.5,595.9 1782.8,596.4 1790.2,597.0 1797.6,597.6 1804.9,598.2 1812.3,598.8 1819.7,599.4 1827.0,600.0 1834.4,600.6 1841.8,601.3 1849.1,601.9 1856.5,602.5 1863.9,603.2 1871.2,603.8 1878.6,604.5 1885.9,605.1 1893.3,605.8 1900.7,606.4 1908.0,607.1 1915.4,607.8 1922.7,608.5 1930.1,609.1 1937.5,609.8 1944.8,610.5 1952.2,611.2 1959.5,611.9 1966.9,612.6 1974.3,613.3 1981.6,614.0 1989.0,614.7 1996.3,615.4 2003.7,616.2 2011.0,616.9 2018.4,617.7 2025.7,618.5 2033.1,619.2 2040.4,620.0 2047.8,620.9 2055.1,621.7 2062.5,622.5 2069.8,623.4 2077.1,624.3 2084.5,625.2 2091.8,626.1 2099.1,627.1 2106.5,628.1 2113.8,629.1 2121.1,630.1 2128.4,631.1 2135.7,632.1 2143.0,633.2 2150.3,634.3 2157.7,635.4 2165.0,636.5 2172.3,637.6 2179.6,638.8 2186.9,639.9 2194.2,641.0 2201.5,642.2 2208.8,643.3 2216.1,644.5 2223.4,645.7 2230.7,646.8 2238.0,648.0 2245.3,649.1 2252.6,650.3 2259.9,651.5 2267.2,652.6 2274.5,653.8 2281.8,654.9 2289.1,656.1 2296.4,657.3 2303.7,658.5 2311.0,659.7 2318.2,660.9 2325.5,662.2 2332.8,663.4 2340.1,664.7 2347.4,666.0 2354.6,667.3 2361.9,668.7 2369.2,670.1 2376.4,671.5 2383.7,672.9 2390.9,674.4 2398.1,676.0 2405.4,677.5 2412.6,679.1 2419.8,680.8 2427.0,682.5 2434.2,684.2 2441.4,686.0 2448.6,687.8 2455.7,689.7 2462.9,691.6 2470.0,693.5 2477.2,695.5 2484.3,697.5 2491.4,699.6 2498.5,701.7 2505.6,703.8 2512.7,706.0 2519.7,708.2 2526.8,710.4 2533.8,712.7 2540.8,715.0 2547.8,717.4 2554.8,719.7 2561.8,722.1 2568.7,724.6 2575.7,727.1 2582.6,729.6 2589.5,732.1 2596.4,734.7 2603.3,737.3 2610.1,740.0 2617.0,742.6 2623.8,745.4 2630.7,748.1 2637.5,750.9 2644.4,753.7 2651.2,756.6 2658.0,759.5 2664.9,762.4 2671.7,765.4 2678.6,768.4 2685.4,771.4 2692.2,774.6 2699.0,777.8 2705.6,781.3 2712.2,784.8 2718.5,788.6 2724.8,792.6 2730.8,796.9 2736.5,801.4 2742.0,806.3 2747.3,811.5 2752.2,817.0 2756.8,822.9 2761.1,829.0 2765.0,835.3 2768.6,841.8 2771.9,848.5 2774.8,855.3 2777.4,862.3 2779.6,869.3 2781.6,876.5 2783.3,883.7 2784.8,890.9 2786.1,898.3 2787.2,905.6 2788.2,912.9 2789.0,920.3 2789.7,927.7 2790.3,935.0 2790.9,942.4 2791.3,949.8 2791.7,957.2 2792.0,964.5 2792.3,971.9 2792.6,979.3 2792.8,986.7 2792.6,994.1 2792.3,1001.5 2792.0,1008.9 2791.7,1016.2 2791.3,1023.6 2790.9,1031.0 2790.3,1038.4 2789.7,1045.7 2789.0,1053.1 2788.2,1060.5 2787.2,1067.8 2786.1,1075.1 2784.8,1082.5 2783.3,1089.7 2781.6,1096.9 2779.6,1104.1 2777.4,1111.1 2774.8,1118.1 2771.9,1124.9 2768.6,1131.6 2765.0,1138.1 2761.1,1144.4 2756.8,1150.5 2752.2,1156.4 2747.3,1161.9 2742.0,1167.1 2736.5,1172.0 2730.8,1176.5 2724.8,1180.8 2718.5,1184.8 2712.2,1188.6 2705.6,1192.1 2699.0,1195.6 2692.2,1198.8 2685.4,1202.0 2678.6,1205.0 2671.7,1208.0 2664.9,1211.0 2658.0,1213.9 2651.2,1216.8 2644.4,1219.7 2637.5,1222.5 2630.7,1225.3 2623.8,1228.0 2617.0,1230.8 2610.1,1233.4 2603.3,1236.1 2596.4,1238.7 2589.5,1241.3 2582.6,1243.8 2575.7,1246.3 2568.7,1248.8 2561.8,1251.3 2554.8,1253.7 2547.8,1256.0 2540.8,1258.4 2533.8,1260.7 2526.8,1263.0 2519.7,1265.2 2512.7,1267.4 2505.6,1269.6 2498.5,1271.7 2491.4,1273.8 2484.3,1275.9 2477.2,1277.9 2470.0,1279.9 2462.9,1281.8 2455.7,1283.7 2448.6,1285.6 2441.4,1287.4 2434.2,1289.2 2427.0,1290.9 2419.8,1292.6 2412.6,1294.3 2405.4,1295.9 2398.1,1297.4 2390.9,1299.0 2383.7,1300.5 2376.4,1301.9 2369.2,1303.3 2361.9,1304.7 2354.6,1306.1 2347.4,1307.4 2340.1,1308.7 2332.8,1310.0 2325.5,1311.2 2318.2,1312.5 2311.0,1313.7 2303.7,1314.9 2296.4,1316.1 2289.1,1317.3 2281.8,1318.5 2274.5,1319.6 2267.2,1320.8 2259.9,1321.9 2252.6,1323.1 2245.3,1324.3 2238.0,1325.4 2230.7,1326.6 2223.4,1327.7 2216.1,1328.9 2208.8,1330.1 2201.5,1331.2 2194.2,1332.4 2186.9,1333.5 2179.6,1334.6 2172.3,1335.8 2165.0,1336.9 2157.7,1338.0 2150.3,1339.1 2143.0,1340.2 2135.7,1341.3 2128.4,1342.3 2121.1,1343.3 2113.8,1344.3 2106.5,1345.3 2099.1,1346.3 2091.8,1347.3 2084.5,1348.2 2077.1,1349.1 2069.8,1350.0 2062.5,1350.9 2055.1,1351.7 2047.8,1352.5 2040.4,1353.4 2033.1,1354.2 2025.7,1354.9 2018.4,1355.7 2011.0,1356.5 2003.7,1357.2 1996.3,1358.0 1989.0,1358.7 1981.6,1359.4 1974.3,1360.1 1966.9,1360.8 1959.5,1361.5 1952.2,1362.2 1944.8,1362.9 1937.5,1363.6 1930.1,1364.3 1922.7,1364.9 1915.4,1365.6 1908.0,1366.3 1900.7,1367.0 1893.3,1367.6 1885.9,1368.3 1878.6,1368.9 1871.2,1369.6 1863.9,1370.2 1856.5,1370.9 1849.1,1371.5 1841.8,1372.1 1834.4,1372.8 1827.0,1373.4 1819.7,1374.0 1812.3,1374.6 1804.9,1375.2 1797.6,1375.8 1790.2,1376.4 1782.8,1377.0 1775.5,1377.5 1768.1,1378.1 1760.7,1378.7 1753.4,1379.2 1746.0,1379.7 1738.6,1380.3 1731.3,1380.8 1723.9,1381.3 1716.5,1381.8 1709.1,1382.3 1701.8,1382.8 1694.4,1383.3 1687.0,1383.8 1679.6,1384.2 1672.3,1384.7 1664.9,1385.1 1657.5,1385.6 1650.1,1386.0 1642.7,1386.4 1635.4,1386.8 1628.0,1387.1 1620.6,1387.5 1613.2,1387.8 1605.8,1388.2 1598.5,1388.5 1591.1,1388.8 1583.7,1389.1 1576.3,1389.3 1568.9,1389.6 1561.5,1389.8 1554.1,1390.0 1546.8,1390.2 1539.4,1390.4 1532.0,1390.6 1524.6,1390.7 1517.2,1390.9 1509.8,1391.0 1502.4,1391.1 1495.0,1391.2 1487.6,1391.3 1480.3,1391.4 1472.9,1391.4 1465.5,1391.5 1458.1,1391.5 1450.7,1391.6 1443.3,1391.6 1435.9,1391.6 1428.5,1391.7 1421.1,1391.7 1413.7,1391.7 1406.3,1391.7 1399.0,1391.7 1391.6,1391.7 1384.2,1391.7 1376.8,1391.7 1369.4,1391.7 1362.0,1391.7 1354.6,1391.7 1347.2,1391.7 1339.8,1391.6 1332.4,1391.6 1325.0,1391.6 1317.6,1391.5 1310.3,1391.5 1302.9,1391.4 1295.5,1391.3 1288.1,1391.3 1280.7,1391.2 1273.3,1391.1 1265.9,1391.0 1258.5,1390.8 1251.1,1390.7 1243.8,1390.6 1236.4,1390.4 1229.0,1390.2 1221.6,1390.1 1214.2,1389.9 1206.8,1389.6 1199.4,1389.4 1192.1,1389.2 1184.7,1388.9 1177.3,1388.7 1169.9,1388.4 1162.5,1388.1 1155.1,1387.8 1147.8,1387.5 1140.4,1387.2 1133.0,1386.9 1125.6,1386.5 1118.2,1386.2 1110.8,1385.8 1103.5,1385.5 1096.1,1385.1 1088.7,1384.7 1081.3,1384.3 1073.9,1383.9 1066.6,1383.5 1059.2,1383.1 1051.8,1382.7 1044.4,1382.3 1037.0,1381.9 1029.6,1381.5 1022.3,1381.1 1014.9,1380.6 1007.5,1380.2 1000.1,1379.7 992.7,1379.3 985.3,1378.8 978.0,1378.3 970.6,1377.8 963.2,1377.3 955.8,1376.7 948.5,1376.2 941.1,1375.6 933.7,1375.0 926.4,1374.3 919.0,1373.7 911.7,1373.0 904.3,1372.3 896.9,1371.5 889.6,1370.7 882.3,1369.9 874.9,1369.1 867.6,1368.2 860.3,1367.2 852.9,1366.2 845.6,1365.2 838.3,1364.2 831.0,1363.1 823.7,1361.9 816.4,1360.8 809.1,1359.6 801.8,1358.4 794.6,1357.1 787.3,1355.9 780.0,1354.6 772.7,1353.2 765.5,1351.9 758.2,1350.5 750.9,1349.1 743.7,1347.7 736.4,1346.3 729.1,1344.9 721.9,1343.5 714.6,1342.1 707.4,1340.6 700.1,1339.2 692.9,1337.7 685.6,1336.2 678.4,1334.8 671.1,1333.3 663.9,1331.9 656.7,1330.4 649.4,1328.9 642.2,1327.5 634.9,1326.0 627.7,1324.5 620.5,1323.0 613.2,1321.4 606.0,1319.9 598.8,1318.4 591.6,1316.8 584.3,1315.2 577.1,1313.6 569.9,1312.0 562.7,1310.3 555.5,1308.7 548.3,1307.0 541.1,1305.2 533.9,1303.5 526.8,1301.7 519.6,1299.9 512.4,1298.1 505.3,1296.2 498.1,1294.3 491.0,1292.3 483.9,1290.3 476.8,1288.3 469.7,1286.3 462.6,1284.2 455.5,1282.0 448.5,1279.9 441.4,1277.7 434.4,1275.4 427.3,1273.2 420.3,1270.9 413.3,1268.6 406.3,1266.2 399.3,1263.8 392.3,1261.5 385.3,1259.0 378.3,1256.6 371.3,1254.2 364.4,1251.7 357.4,1249.2 350.4,1246.7 343.5,1244.2 336.5,1241.7 329.6,1239.2 322.6,1236.6 315.7,1234.0 308.8,1231.3 301.9,1228.7 295.0,1226.0 288.2,1223.2 281.3,1220.4 274.5,1217.5 267.7,1214.6 261.0,1211.7 254.2,1208.6 247.5,1205.5 240.8,1202.4 234.2,1199.1 227.6,1195.8 221.0,1192.5 214.4,1189.0 207.9,1185.5 201.4,1182.0 194.9,1178.4 188.5,1174.8 182.1,1171.1 175.7,1167.4 169.3,1163.7 162.9,1159.9 156.6,1156.2 150.2,1152.4 143.9,1148.5 137.7,1144.7 131.4,1140.8 125.3,1136.8 119.2,1132.6 113.2,1128.2 107.3,1123.6 101.6,1118.7 96.1,1113.6 91.1,1108.0 86.7,1102.0 83.2,1095.6 80.5,1088.7 80.0,1046.7Z" fill="none" stroke="url(#dkx)" stroke-width="3"/></g>
<path d="M70,986.7H2800" stroke="#760808" stroke-width="2"/>
<path d="M687,560V1420M1939.5,500V1480" stroke="#7a0a1e" stroke-opacity="0.58" stroke-width="2.2" fill="none"/>
<path d="M147,700V1270M2743,780V1200" stroke="#7a0a0e" stroke-opacity="0.4" stroke-width="2" fill="none"/>
<g fill="none" stroke="#1a0a26" stroke-width="1.9"><circle cx="245.4" cy="872.1" r="13.6"/><circle cx="302.6" cy="872.1" r="13.6"/><path d="M259,872.1H289"/><circle cx="245.4" cy="1101.3" r="13.6"/><circle cx="302.6" cy="1101.3" r="13.6"/><path d="M259,1101.3H289"/><path d="M468.2,759.5A14.2,14.2 0 1 1 487.6,748.3 M488.5,747.3h7.5 M517.9,749.3A14.2,14.2 0 1 1 544.3,753.0 M487.6,1225.1A14.2,14.2 0 1 1 468.2,1213.9 M488.5,1226.1h7.5 M544.3,1220.4A14.2,14.2 0 1 1 517.9,1224.1"/></g>
</g>
</svg>
<svg id="icons" style="position:absolute;left:0;top:0" width="2880" height="1800" viewBox="0 0 2880 1800">
<defs>
<radialGradient id="gS" cx="0.45" cy="0.25" r="0.75"><stop offset="0" stop-color="#58e0ff"/><stop offset="0.35" stop-color="#1e9cff"/><stop offset="0.8" stop-color="#1a50ff"/><stop offset="1" stop-color="#2a48e8"/></radialGradient>
<linearGradient id="gL" x1="0" y1="0" x2="0" y2="1"><stop offset="0" stop-color="#8fd0f4"/><stop offset="0.5" stop-color="#3d9adf"/><stop offset="1" stop-color="#2a7fc8"/></linearGradient>
<linearGradient id="gL2" x1="0" y1="0" x2="0" y2="1"><stop offset="0" stop-color="#4aa4e6"/><stop offset="1" stop-color="#2e86cf"/></linearGradient>
<radialGradient id="gE2" cx="0.5" cy="0.4" r="0.6"><stop offset="0" stop-color="#3f95dc"/><stop offset="0.7" stop-color="#3a90d8"/><stop offset="1" stop-color="#6ab4ea"/></radialGradient>
<linearGradient id="gV" x1="0" y1="0" x2="1" y2="0"><stop offset="0" stop-color="#a8dcf8"/><stop offset="0.45" stop-color="#45a2e4"/><stop offset="1" stop-color="#1f6cb4"/></linearGradient>
<linearGradient id="gT" x1="0" y1="0" x2="0" y2="1"><stop offset="0" stop-color="#1a6aa8"/><stop offset="1" stop-color="#0a4a84"/></linearGradient>
<linearGradient id="gFl" x1="0" y1="0" x2="0" y2="1"><stop offset="0" stop-color="#888"/><stop offset="0.22" stop-color="#d02808"/><stop offset="0.45" stop-color="#ff8a18"/><stop offset="0.7" stop-color="#ffe070"/><stop offset="1" stop-color="#ffffff"/></linearGradient>
<linearGradient id="gSt" x1="0" y1="0" x2="1" y2="0"><stop offset="0" stop-color="#555"/><stop offset="0.5" stop-color="#e8e8e8"/><stop offset="1" stop-color="#555"/></linearGradient>
<linearGradient id="gRb" x1="0" y1="0" x2="0" y2="1"><stop offset="0" stop-color="#ff3070"/><stop offset="0.16" stop-color="#ff3070"/><stop offset="0.26" stop-color="#4070ff"/><stop offset="0.36" stop-color="#20d8c0"/><stop offset="0.5" stop-color="#d8f020"/><stop offset="0.62" stop-color="#40e070"/><stop offset="0.72" stop-color="#3080ff"/><stop offset="0.84" stop-color="#ff3060"/><stop offset="1" stop-color="#ff3060"/></linearGradient>
<radialGradient id="gRh" cx="0.5" cy="0.5" r="0.5"><stop offset="0.6" stop-color="#fff" stop-opacity="0"/><stop offset="1" stop-color="#fff" stop-opacity="0.45"/></radialGradient>
<pattern id="dots" width="4" height="4" patternUnits="userSpaceOnUse"><rect width="4" height="4" fill="#fff"/><rect width="2" height="2" fill="#15156a"/></pattern>
<clipPath id="cStr"><circle cx="1643.5" cy="189" r="20"/></clipPath>
<filter id="ib" x="-10%" y="-10%" width="120%" height="120%"><feGaussianBlur stdDeviation="0.7"/></filter>
</defs>
<g filter="url(#ib)"><path d="M33,46.500c8,9 12.500,18 12.500,27c0,11 -5,21 -12.500,25.500c-7.500,-4.500 -12.500,-14.500 -12.500,-25.500c0,-9 4.500,-18 12.500,-27z" fill="#fcfcfe" stroke="#8e8e8e" stroke-width="1.5"/><path d="M33,56v14M27,59l12,9M39,59l-12,9M26,64h14" stroke="#f4a0ac" stroke-width="1.8" fill="none" stroke-dasharray="2.500 1.500"/><path d="M32,68.500c0,-2.800 4,-2.800 4,0v7.500l2.500,-1c1.500,-0.500 2.500,0.500 2.500,1.500l2,0.500c1.500,0.500 2,1.500 2,3v9c0,2.500 -1,4 -2,5.500h-11c-1.500,-2 -4,-6 -5.500,-9c-1,-2 1,-3.500 2.500,-2.500l3,2.500z" fill="#fff" stroke="#333" stroke-width="1.500" stroke-linejoin="round"/><path d="M83.500,57l6,-2.500l4,2l6,-2l11,7.500v22.500l-4,2z" fill="#ececea" stroke="#8f8f8f" stroke-width="1.3" stroke-linejoin="round"/><path d="M86,59.500l20,7.500M89,57l19,7.500" stroke="#a0a0a0" stroke-width="1.200" fill="none"/><path d="M78.500,63l24,9.500l4.500,16.500l-8.500,2.800l-16,-10.500z" fill="#f3f1a2" stroke="#929280" stroke-width="1.400" stroke-linejoin="round"/><path d="M107,89l4,-2.500v-4" stroke="#7c7c7c" stroke-width="2.200" fill="none"/><path d="M144.500,55.600l6,-1.100l18,9.500v24l4.500,1l-5.500,4l-23,-11.700z" fill="#585858"/><path d="M148,59.500l17,8.500v22l-17,-8.500z" fill="url(#gFl)"/><path d="M148,59.500l17,8.500v4l-17,-8.500z" fill="#d8d8d8"/><path d="M148,61.500l17,8.500" stroke="#666" stroke-width="1.200"/><path d="M167.500,93l5.500,-4l-4.500,-1z" fill="#222"/><rect x="232" y="79" width="36" height="14.500" fill="#b0b0b8"/><rect x="230.300" y="77.400" width="34.200" height="14" fill="#f4c81c"/><path d="M230.300,76.800h34.200" stroke="#222" stroke-width="1.800" stroke-dasharray="2 2"/><path d="M238.700,77.500v4.500M254.900,77.500v4.500" stroke="#222" stroke-width="2"/><path d="M235.500,83.500h3.500v4M252,83.500h4.500v4h-4.500z" stroke="#b8920c" stroke-width="1.600" fill="none"/><path d="M230.300,60.600h35.200" stroke="#8a8a8a" stroke-width="1.500"/><path d="M257.100,54v19.500" stroke="#444" stroke-width="1.600"/><path d="M265,56v17" stroke="#777" stroke-width="1.400" stroke-dasharray="2 2"/><path d="M231.500,73h34" stroke="#777" stroke-width="1.400" stroke-dasharray="2 2"/><path d="M346.8,57L363,89" stroke="#111" stroke-width="2"/><circle cx="346.8" cy="57" r="4.4" fill="#1040f0"/><circle cx="355" cy="73" r="7.2" fill="#ff1808"/><circle cx="363" cy="89" r="4.6" fill="#08e838"/><circle cx="515.5" cy="72.7" r="16.5" fill="url(#gS)"/><path d="M665.5,55h24l8,8v28h-32z" fill="#fff" stroke="#36364a" stroke-width="1.8"/><path d="M689.5,55l8,8h-8z" fill="#5aa8f0" stroke="#1a1a5a" stroke-width="1.2"/><path d="M668,61h10l12,9M668,70h20M668,79h10l12,-9M668,84h26" stroke="#667" stroke-width="1.3" stroke-dasharray="2 2" fill="none"/><path d="M674,87h5M682,87h4" stroke="#445" stroke-width="2"/><rect x="837" y="52.5" width="8.5" height="13" fill="#fff" stroke="#15156a" stroke-width="2"/><path d="M827,66h28v12c0,8 -6,13 -14,13s-14,-5 -14,-13z" fill="url(#dots)" stroke="#15156a" stroke-width="2"/><circle cx="32" cy="130.6" r="13.6" fill="url(#gS)"/><circle cx="32" cy="130.6" r="14" fill="none" stroke="#6a8af8" stroke-width="1.4" stroke-dasharray="4 2"/><rect x="2771" y="139" width="12" height="3" fill="#111"/><rect x="2803" y="127" width="17" height="15" fill="none" stroke="#111" stroke-width="1.6"/><rect x="2803" y="127" width="17" height="3" fill="#111"/><path d="M2840,126l16,15M2856,126l-16,15" stroke="#111" stroke-width="2.6"/><circle cx="39.200" cy="182.800" r="10.300" fill="none" stroke="#5d717a" stroke-width="3.800"/><path d="M46,191.500l9.500,13.500" stroke="#5d717a" stroke-width="6.500"/><rect x="81.500" y="167.800" width="23" height="17" fill="none" stroke="#5d717a" stroke-width="2.200"/><circle cx="104.800" cy="187" r="9.800" fill="none" stroke="#5d717a" stroke-width="3.600"/><path d="M111.500,196l11,14" stroke="#5d717a" stroke-width="6.500"/><path d="M161.300,203.600c3.500,-8 6.500,-20 10.400,-27.600c2,-3.500 6,-5 10,-5.500c3,-1.500 6,-1.500 8,-0.500c3,-1 5.500,-0.500 7,0.800c2.500,0 4.500,1.500 4.500,4.700c-1.500,5.500 -8,12.500 -12.200,17.700l14,4.300l-2,4l-26.700,9.500" fill="none" stroke="#2a2a2a" stroke-width="1.800" stroke-linejoin="round" stroke-linecap="round"/><path d="M182.500,178.400l4,-6M187.300,180.200l4.400,-6.500M191.700,181l4.700,-6.500" stroke="#111" stroke-width="2.800"/><path d="M236.800,178c0.500,-5 2.500,-9 6,-11.500" fill="none" stroke="#46464e" stroke-width="3.600"/><path d="M224.500,187.500c0,-4 6,-5.500 14,-5.500c9,0 18,1 24,3c4,3 7,8 6,11.500c-0.500,2 -2,3.500 -3.500,4" fill="none" stroke="#46464e" stroke-width="3.600"/><path d="M241,204.500c2,4 5,7.500 8.500,9l6,-3.500" fill="none" stroke="#46464e" stroke-width="3.600"/><path d="M249,168.500l16.500,13.500l-4,0.500c1.500,9 0.500,19 -5,28l-4,-2.500c4,-8 5,-17 3.500,-25l-5.500,1z" fill="#3b8ee8"/><path d="M224,186l13,5.500l-1,-4l15.500,12.500l-17.500,5.500l1,-4.500c-5,-2 -9.500,-6 -11.500,-10.500z" fill="#3b8ee8"/><path d="M302.500,167.500l8.500,5l-4.500,8l-1,-5.500z" fill="#3a3a2a"/><path d="M306.500,173l37,9v21.500l-31,6.500l-4,-20z" fill="#ffee12"/><circle cx="328.8" cy="195.8" r="13" fill="url(#gS)"/><path transform="translate(400.3,188) rotate(0)" d="M-27.0,0 C-16.2,-12.5 16.2,-12.5 27.0,0 C16.2,12.5 -16.2,12.5 -27.0,0Z" fill="url(#gL)"/><path d="M436,189c4,-7 14,-12.400 26.600,-12.400s22.600,5.400 26.800,12.400c-4.200,7 -14.200,12.400 -26.800,12.400s-22.600,-5.400 -26.600,-12.400z" fill="url(#gE2)"/><path d="M497.5,186.5c18,6 40,5 54.5,-3.5c-8,13 -40,14 -54.5,3.5z" fill="url(#gL)"/><path d="M562,199.5l25,-22.5l25.5,18l0,4.5z" fill="url(#gT)"/><path d="M562,199.5l50.5,0l0,-4l-25,-3z" fill="#0c5490"/><path d="M624.5,199.5l25,-23l25.5,23z" fill="url(#gT)"/><path transform="translate(711,187.5) rotate(17)" d="M-27.5,0 C-16.5,-8.125 16.5,-8.125 27.5,0 C16.5,8.125 -16.5,8.125 -27.5,0Z" fill="url(#gL)"/><path transform="translate(773,187.5) rotate(-16)" d="M-28.0,0 C-16.8,-7.5 16.8,-7.5 28.0,0 C16.8,7.5 -16.8,7.5 -28.0,0Z" fill="url(#gL)"/><path d="M808,202l44,-27c5,3 9,10 9,18c-2,6 -8,9 -16,10z" fill="url(#gL)"/><path d="M808,202l44,-27" stroke="#1f6cb4" stroke-width="1.2"/><path d="M872,184c2,-9 14,-11 26,-6c12,5 22,13 25,22c-4,4 -18,4 -30,1c-12,-3 -22,-8 -21,-17z" fill="url(#gL2)"/><path d="M958,163c8,10 11,22 11,30c0,10 -4,18 -9,23h-4c-5,-5 -9,-13 -9,-23c0,-8 3,-20 11,-30z" fill="url(#gV)"/><path d="M1016,186a21,21 0 0 1 40,-6" fill="none" stroke="#3d8fd6" stroke-width="2.4"/><path d="M1051,181l12,1l-6,9z" fill="#3d8fd6"/><path d="M1060,199a21,21 0 0 1 -40,4" fill="none" stroke="#3d8fd6" stroke-width="2.4"/><path d="M1012.5,199.5l25,-22l24.5,22z" fill="url(#gT)"/><path d="M1099,163c8,10 11,22 11,30c0,10 -4,18 -9,23h-4c-5,-5 -9,-13 -9,-23c0,-8 3,-20 11,-30z" fill="url(#gV)"/><path d="M1160.5,163c8,10 11,22 11,30c0,10 -4,18 -9,23h-4c-5,-5 -9,-13 -9,-23c0,-8 3,-20 11,-30z" fill="url(#gV)"/><path d="M1086,182c-8,1 -13,3 -13,6c0,5 12,8 26,8s27,-3 27,-8c0,-3 -4,-5 -10,-6" fill="none" stroke="#ff1818" stroke-width="3"/><path d="M1110,178l10,2l-6,8z" fill="#ff1818"/><path d="M1148,182c-8,1 -13,3 -13,6c0,5 12,8 26,8s27,-3 27,-8c0,-3 -4,-5 -10,-6" fill="none" stroke="#ff1818" stroke-width="3"/><path d="M1172,178l10,2l-6,8z" fill="#ff1818"/><path d="M1145,190l10.5,11l-6,0l0,15l-9,0l0,-15l-6,0z" fill="#ffa818" stroke="#b87000" stroke-width="1.2"/><circle cx="1238" cy="188" r="17.5" fill="none" stroke="#111" stroke-width="1.8"/><ellipse cx="1238" cy="179" rx="9" ry="5.5" fill="none" stroke="#111" stroke-width="1.6"/><path d="M1223.5,181c2,8 8,10 14.5,10s12.500,-2 14.500,-10" fill="none" stroke="#111" stroke-width="1.6"/><path d="M1221,190c3,9 10,11 17,11s14,-2 17,-11" fill="none" stroke="#111" stroke-width="1.6"/><circle cx="1300" cy="188" r="17.5" fill="none" stroke="#111" stroke-width="1.8"/><ellipse cx="1300" cy="179" rx="9" ry="5.5" fill="none" stroke="#f01818" stroke-width="1.6"/><path d="M1285.5,181c2,8 8,10 14.5,10s12.500,-2 14.500,-10" fill="none" stroke="#f01818" stroke-width="1.6"/><path d="M1283,190c3,9 10,11 17,11s14,-2 17,-11" fill="none" stroke="#f01818" stroke-width="1.6"/><circle cx="1362.7" cy="188" r="17.5" fill="none" stroke="#111" stroke-width="2"/><ellipse cx="1362.7" cy="188" rx="17" ry="7" fill="none" stroke="#111" stroke-width="1.5"/><ellipse cx="1362.7" cy="188" rx="7" ry="17" fill="none" stroke="#111" stroke-width="1.5"/><path d="M1350.7,176l24,0l-12,22zM1347.7,196l15,-24l15,24zM1346.7,182l32,0M1348.7,198l28,0" fill="none" stroke="#111" stroke-width="1.5"/><ellipse cx="1362.7" cy="188" rx="12" ry="12" fill="none" stroke="#111" stroke-width="1.3"/><circle cx="1441" cy="189.6" r="19.8" fill="url(#gS)"/><circle cx="1503" cy="189.6" r="19.8" fill="url(#gS)"/><circle cx="1565" cy="189.6" r="19.8" fill="url(#gS)"/><path d="M1553,205c6,-4 14,-3 20,-3c4,-4 10,-4 14,0l4,4c-6,3 -14,2 -18,0c-6,3 -14,3 -20,-1z" fill="#10b8e0"/><path d="M1556,204l24,0" stroke="#111" stroke-width="2.5"/><path d="M1556,196l26,-26l7,7l-26,26z" fill="#4a90f0" stroke="#111" stroke-width="2.2"/><path d="M1560,197l24,-24" stroke="#fff" stroke-width="2"/><path d="M1556,196l7,7l-10,3z" fill="#f8c890" stroke="#111" stroke-width="1"/><g clip-path="url(#cStr)"><rect x="1623" y="169" width="41" height="40" fill="url(#gSt)"/><rect x="1623" y="171.0" width="41" height="2.8" fill="#333" fill-opacity="0.85"/><rect x="1623" y="176.6" width="41" height="2.8" fill="#333" fill-opacity="0.85"/><rect x="1623" y="182.2" width="41" height="2.8" fill="#333" fill-opacity="0.85"/><rect x="1623" y="187.8" width="41" height="2.8" fill="#333" fill-opacity="0.85"/><rect x="1623" y="193.4" width="41" height="2.8" fill="#333" fill-opacity="0.85"/><rect x="1623" y="199.0" width="41" height="2.8" fill="#333" fill-opacity="0.85"/><rect x="1623" y="204.6" width="41" height="2.8" fill="#333" fill-opacity="0.85"/></g><circle cx="1705" cy="188.4" r="19.8" fill="url(#gRb)"/><circle cx="1705" cy="188.4" r="19.8" fill="url(#gRh)"/><path d="M1775,172c-8,4 -10,8 -6,13c5,5 7,9 -4,17" fill="none" stroke="#1848f0" stroke-width="3.2" stroke-dasharray="7 4"/><path d="M1803,172c-10,4 -12,9 -7,14c6,6 6,10 -5,18" fill="none" stroke="#1848f0" stroke-width="3.2"/><path d="M1783,166v46" stroke="#111" stroke-width="1.5" stroke-dasharray="5 2 1 2"/><rect x="1844.500" y="172" width="14" height="14" fill="#ff2010"/><rect x="1862.500" y="172" width="14" height="14" fill="#ffc818"/><rect x="1844.500" y="190.500" width="14" height="14" fill="#98c840"/><rect x="1862.500" y="190.500" width="14" height="14" fill="#68d0d0"/><path d="M2856.400,1797.500l21.100,-21.100M2864,1797.500l13.500,-12.700M2872,1797.500l5.500,-4.800" stroke="#8a8a8a" stroke-width="2.200"/><path d="M2880,1791v9h-9c6,0 9,-3 9,-9z" fill="#222"/><path d="M0,1792v8h8c-5,0 -8,-3 -8,-8z" fill="#222"/></g></svg>
</body></html>
